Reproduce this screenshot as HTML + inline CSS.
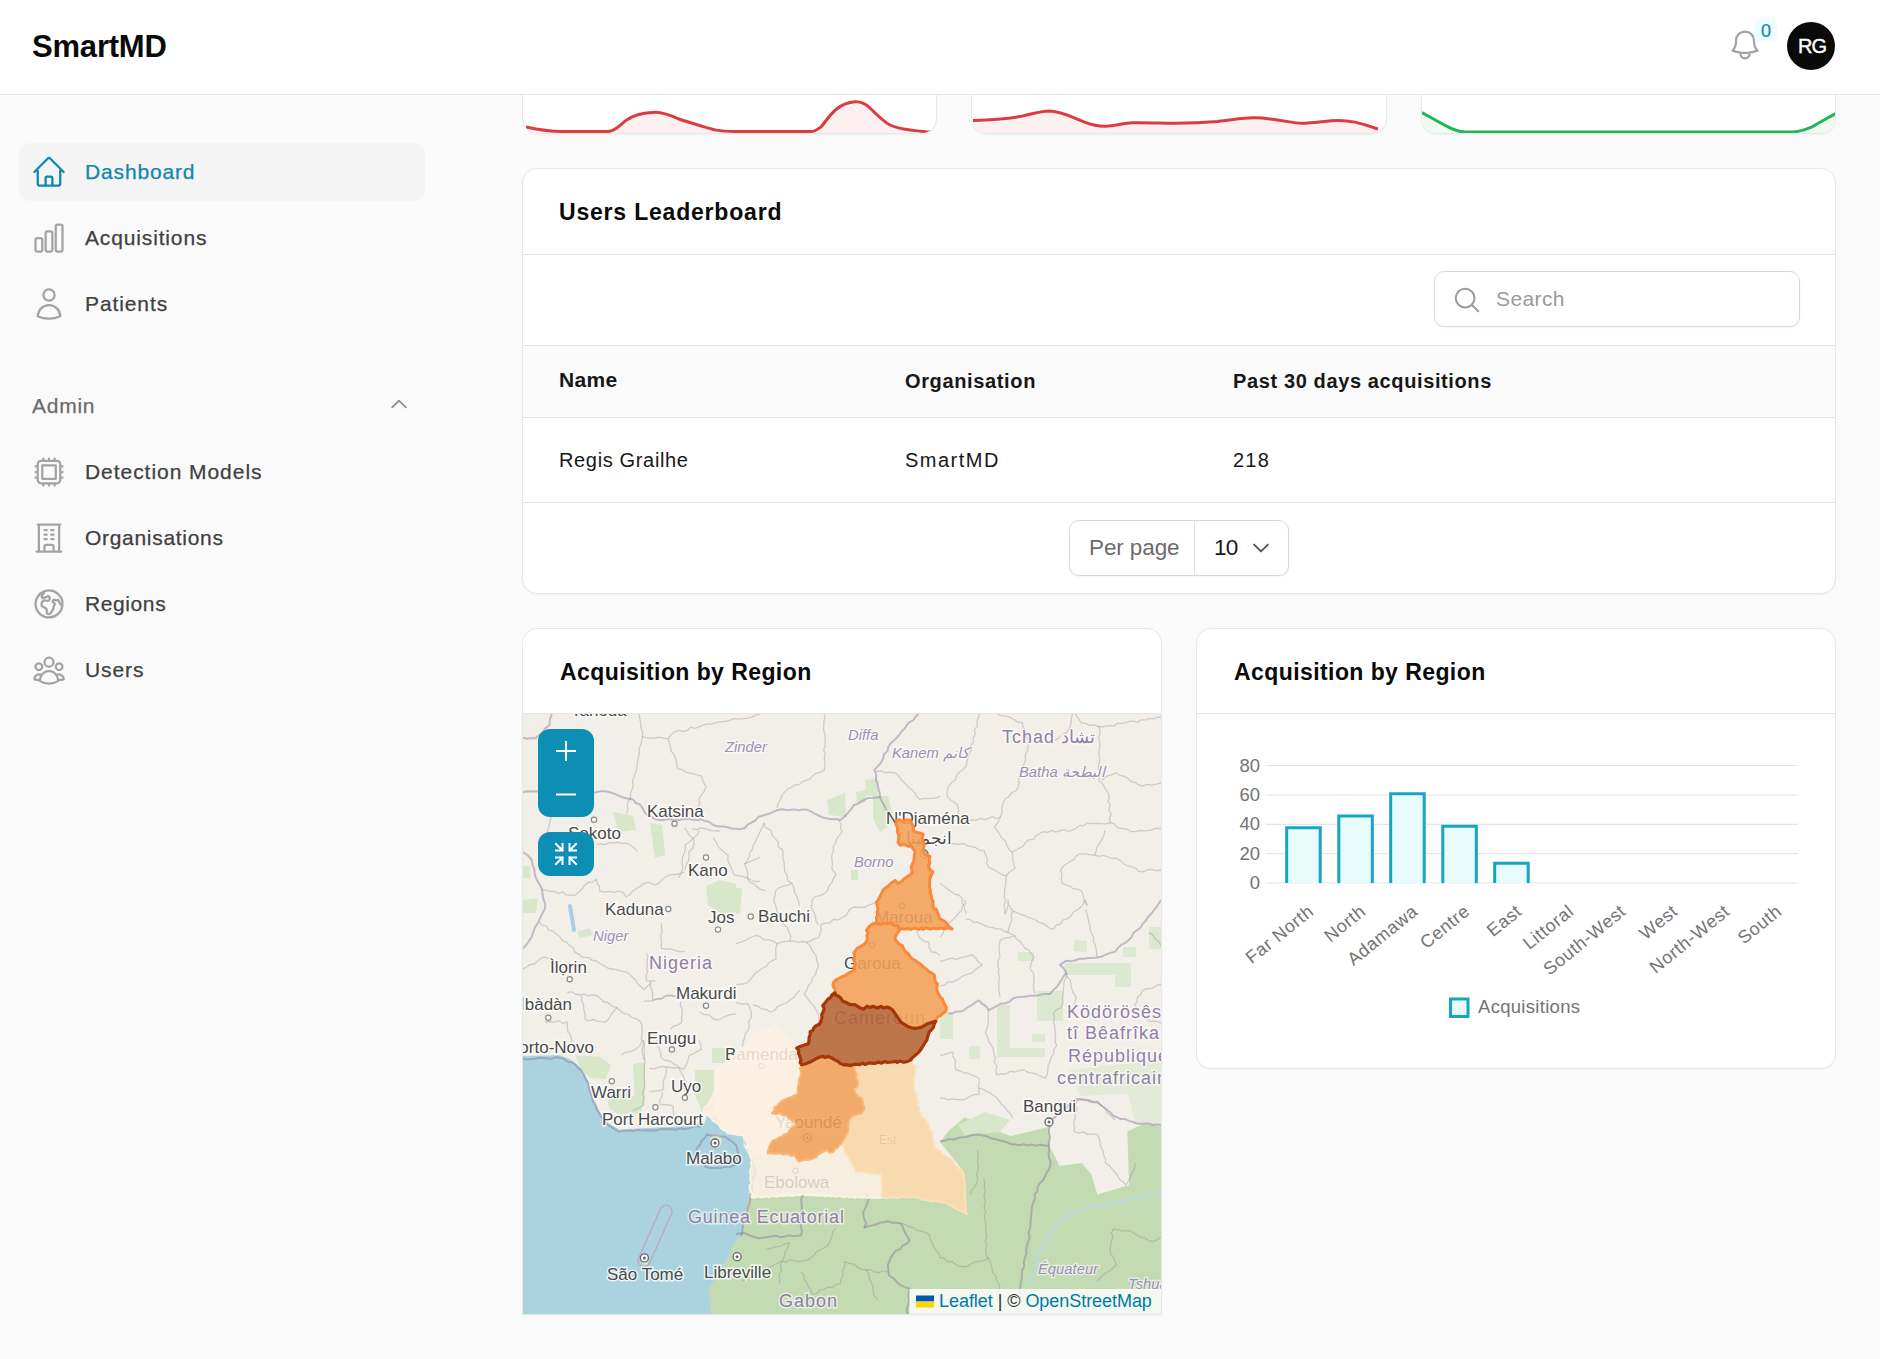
<!DOCTYPE html>
<html><head><meta charset="utf-8">
<style>
*{box-sizing:border-box;margin:0;padding:0}
html,body{width:1880px;height:1359px;overflow:hidden;background:#fafafa;font-family:"Liberation Sans",sans-serif;color:#171717}
.abs{position:absolute}
.t{position:absolute;white-space:nowrap;line-height:1}
#hdr{position:absolute;left:0;top:0;width:1880px;height:95px;background:#fff;border-bottom:1px solid #e5e5e5;z-index:5}
.card{position:absolute;background:#fff;border:1px solid #e7e7e7;border-radius:15px;box-shadow:0 1px 2px rgba(0,0,0,0.04);overflow:hidden}
.nav{color:#404040;font-size:21px;-webkit-text-stroke:0.25px currentColor}
.ico{position:absolute;fill:none;stroke:#a3a3a3;stroke-width:1.5;stroke-linecap:round;stroke-linejoin:round}
.ttl{font-weight:bold;font-size:23px;color:#0a0a0a}
</style></head><body>
<!-- header -->
<div id="hdr">
  <div class="t" style="left:32px;top:31px;font-size:31px;font-weight:bold;color:#0a0a0a;letter-spacing:-0.2px">SmartMD</div>
  <svg class="ico" style="left:1727px;top:27px;stroke:#a3a3a3" width="36" height="36" viewBox="0 0 24 24"><path d="M14.857 17.082a23.848 23.848 0 0 0 5.454-1.31A8.967 8.967 0 0 1 18 9.75V9A6 6 0 0 0 6 9v.75a8.967 8.967 0 0 1-2.312 6.022c1.733.64 3.56 1.085 5.455 1.31m5.714 0a24.255 24.255 0 0 1-5.714 0m5.714 0a3 3 0 1 1-5.714 0"/></svg>
  <div class="abs" style="left:1754px;top:19px;width:23px;height:23px;border-radius:6px;background:#ecfeff"></div>
  <div class="t" style="left:1761px;top:22px;font-size:18px;color:#0e86a8;-webkit-text-stroke:0.2px #0e86a8">0</div>
  <div class="abs" style="left:1787px;top:22px;width:48px;height:48px;border-radius:50%;background:#0a0a0a"></div>
  <div class="t" style="left:1798px;top:36px;font-size:20px;color:#fff;letter-spacing:-1px;-webkit-text-stroke:0.4px #fff">RG</div>
</div>

<!-- sidebar -->
<div class="abs" style="left:19px;top:143px;width:406px;height:58px;border-radius:10px;background:#f4f4f4"></div>
<svg class="ico" style="left:31px;top:154px;stroke:#0f86ab" width="36" height="36" viewBox="0 0 24 24"><path d="m2.25 12 8.954-8.955c.44-.439 1.152-.439 1.591 0L21.75 12M4.5 9.75v10.125c0 .621.504 1.125 1.125 1.125H9.75v-4.875c0-.621.504-1.125 1.125-1.125h2.25c.621 0 1.125.504 1.125 1.125V21h4.125c.621 0 1.125-.504 1.125-1.125V9.75M8.25 21h8.25"/></svg>
<svg class="ico" style="left:31px;top:220px" width="36" height="36" viewBox="0 0 24 24"><path d="M3 13.125C3 12.504 3.504 12 4.125 12h2.25c.621 0 1.125.504 1.125 1.125v6.75C7.5 20.496 6.996 21 6.375 21h-2.25A1.125 1.125 0 0 1 3 19.875v-6.75ZM9.75 8.625c0-.621.504-1.125 1.125-1.125h2.25c.621 0 1.125.504 1.125 1.125v11.25c0 .621-.504 1.125-1.125 1.125h-2.25a1.125 1.125 0 0 1-1.125-1.125V8.625ZM16.5 4.125c0-.621.504-1.125 1.125-1.125h2.25C20.496 3 21 3.504 21 4.125v15.75c0 .621-.504 1.125-1.125 1.125h-2.25a1.125 1.125 0 0 1-1.125-1.125V4.125Z"/></svg>
<svg class="ico" style="left:31px;top:286px" width="36" height="36" viewBox="0 0 24 24"><path d="M15.75 6a3.75 3.75 0 1 1-7.5 0 3.75 3.75 0 0 1 7.5 0ZM4.501 20.118a7.5 7.5 0 0 1 14.998 0A17.933 17.933 0 0 1 12 21.75c-2.676 0-5.216-.584-7.499-1.632Z"/></svg>
<svg class="ico" style="left:31px;top:454px" width="36" height="36" viewBox="0 0 24 24"><path d="M8.25 3v1.5M4.5 8.25H3m18 0h-1.5M4.5 12H3m18 0h-1.5m-15 3.75H3m18 0h-1.5M8.25 19.5V21M12 3v1.5m0 15V21m3.75-18v1.5m0 15V21m-9-1.5h10.5a2.25 2.25 0 0 0 2.25-2.25V6.75a2.25 2.25 0 0 0-2.25-2.25H6.75A2.25 2.25 0 0 0 4.5 6.75v10.5a2.25 2.25 0 0 0 2.25 2.25Zm.75-12h9v9h-9v-9Z"/></svg>
<svg class="ico" style="left:31px;top:520px" width="36" height="36" viewBox="0 0 24 24"><path d="M3.75 21h16.5M4.5 3h15M5.25 3v18m13.5-18v18M9 6.75h1.5m-1.5 3h1.5m-1.5 3h1.5m3-6H15m-1.5 3H15m-1.5 3H15M9 21v-3.375c0-.621.504-1.125 1.125-1.125h3.75c.621 0 1.125.504 1.125 1.125V21"/></svg>
<svg class="ico" style="left:31px;top:586px" width="36" height="36" viewBox="0 0 24 24"><path d="m20.893 13.393-1.135-1.135a2.252 2.252 0 0 1-.421-.585l-1.08-2.16a.414.414 0 0 0-.663-.107.827.827 0 0 1-.812.21l-1.273-.363a.89.89 0 0 0-.738 1.595l.587.39c.59.395.674 1.23.172 1.732l-.2.2c-.212.212-.33.498-.33.796v.41c0 .409-.11.809-.32 1.158l-1.315 2.191a2.11 2.11 0 0 1-1.81 1.025 1.055 1.055 0 0 1-1.055-1.055v-1.172c0-.92-.56-1.747-1.414-2.089l-.655-.261a2.25 2.25 0 0 1-1.383-2.46l.007-.042a2.25 2.25 0 0 1 .29-.787l.09-.15a2.25 2.25 0 0 1 2.37-1.048l1.178.236a1.125 1.125 0 0 0 1.302-.795l.208-.73a1.125 1.125 0 0 0-.578-1.315l-.665-.332-.091.091a2.25 2.25 0 0 1-1.591.659h-.18c-.249 0-.487.1-.662.274a.931.931 0 0 1-1.458-1.137l1.411-2.353a2.25 2.25 0 0 0 .286-.76m11.928 9.869A9 9 0 0 0 8.965 3.525m11.928 9.868A9 9 0 1 1 8.965 3.525"/></svg>
<svg class="ico" style="left:31px;top:652px" width="36" height="36" viewBox="0 0 24 24"><path d="M18 18.72a9.094 9.094 0 0 0 3.741-.479 3 3 0 0 0-4.682-2.72m.94 3.198.001.031c0 .225-.012.447-.037.666A11.944 11.944 0 0 1 12 21c-2.17 0-4.207-.576-5.963-1.584A6.062 6.062 0 0 1 6 18.719m12 0a5.971 5.971 0 0 0-.941-3.197m0 0A5.995 5.995 0 0 0 12 12.75a5.995 5.995 0 0 0-5.058 2.772m0 0a3 3 0 0 0-4.681 2.72 8.986 8.986 0 0 0 3.74.477m.94-3.197a5.971 5.971 0 0 0-.94 3.197M15 6.75a3 3 0 1 1-6 0 3 3 0 0 1 6 0Zm6 3a2.250 2.25 0 1 1-4.5 0 2.25 2.25 0 0 1 4.5 0Zm-13.5 0a2.25 2.25 0 1 1-4.5 0 2.25 2.25 0 0 1 4.5 0Z"/></svg>
<svg class="ico" style="left:388px;top:393px;stroke:#8a8a8a;stroke-width:1.8" width="22" height="22" viewBox="0 0 24 24"><path d="m4.5 15.75 7.5-7.5 7.5 7.5"/></svg>
<div class="t nav" style="left:85px;top:161px;color:#0f86ab;letter-spacing:0.85px">Dashboard</div>
<div class="t nav" style="left:85px;top:227px;letter-spacing:0.85px">Acquisitions</div>
<div class="t nav" style="left:85px;top:293px;letter-spacing:0.9px">Patients</div>
<div class="t nav" style="left:32px;top:395px;color:#6b6b6b;letter-spacing:0.75px">Admin</div>
<div class="t nav" style="left:85px;top:461px;letter-spacing:0.95px">Detection Models</div>
<div class="t nav" style="left:85px;top:527px;letter-spacing:0.7px">Organisations</div>
<div class="t nav" style="left:85px;top:593px;letter-spacing:0.6px">Regions</div>
<div class="t nav" style="left:85px;top:659px;letter-spacing:0.9px">Users</div>

<!-- top stat cards (bottom parts) -->
<div class="card" style="left:522px;top:60px;width:415px;height:74px"></div>
<div class="card" style="left:971px;top:60px;width:416px;height:74px"></div>
<div class="card" style="left:1421px;top:60px;width:415px;height:74px"></div>
<svg class="abs" style="left:0;top:0;z-index:2" width="1880" height="140">
  <defs>
    <clipPath id="c1"><rect x="523" y="60" width="413" height="73" rx="14"/></clipPath>
    <clipPath id="c2"><rect x="972" y="60" width="414" height="73" rx="14"/></clipPath>
    <clipPath id="c3"><rect x="1422" y="60" width="413" height="73" rx="14"/></clipPath>
  </defs>
  <g clip-path="url(#c1)">
    <path d="M526,127 C540,130 552,131.5 562,131.5 L608,131.5 C615,131.5 620,125 626,120.4 C632,116 640,112.5 655,112.2 C662,112 668,114 681,119.8 L702,126.3 C712,129.5 718,131.5 735,131.5 L811,131.5 C815,131.5 818,129 821,126.9 C828,119 836,103 855,101.8 C862,101.5 866,104 870,108 C878,116 884,122 890,125 C896,128 905,130 926,131.7 L936,132 L936,140 L526,140Z" fill="#fdf0f0" stroke="none"/>
    <path d="M526,127 C540,130 552,131.5 562,131.5 L608,131.5 C615,131.5 620,125 626,120.4 C632,116 640,112.5 655,112.2 C662,112 668,114 681,119.8 L702,126.3 C712,129.5 718,131.5 735,131.5 L811,131.5 C815,131.5 818,129 821,126.9 C828,119 836,103 855,101.8 C862,101.5 866,104 870,108 C878,116 884,122 890,125 C896,128 905,130 926,131.7 L936,132" fill="none" stroke="#dc3b40" stroke-width="3"/>
  </g>
  <g clip-path="url(#c2)">
    <path d="M973,120.4 C990,120 1003,119.5 1019.8,116.6 C1030,114.5 1040,111 1050,111 C1062,111.5 1072,117 1084.5,122.1 C1092,125 1098,126.5 1106,126.2 C1115,125.5 1125,123 1132,122.8 C1150,122.5 1165,123.5 1175,123.3 C1190,123 1205,122.3 1218,121.4 C1232,120 1242,117.8 1254,117.8 C1264,117.8 1270,119 1276,119.7 C1288,121.5 1295,123.3 1302,123.3 C1315,123 1328,120.4 1338,120.4 C1346,120.4 1352,121.5 1355,122.1 C1365,124.5 1372,127 1380,129.5 L1386,131 L1386,140 L973,140Z" fill="#fdf0f0"/>
    <path d="M973,120.4 C990,120 1003,119.5 1019.8,116.6 C1030,114.5 1040,111 1050,111 C1062,111.5 1072,117 1084.5,122.1 C1092,125 1098,126.5 1106,126.2 C1115,125.5 1125,123 1132,122.8 C1150,122.5 1165,123.5 1175,123.3 C1190,123 1205,122.3 1218,121.4 C1232,120 1242,117.8 1254,117.8 C1264,117.8 1270,119 1276,119.7 C1288,121.5 1295,123.3 1302,123.3 C1315,123 1328,120.4 1338,120.4 C1346,120.4 1352,121.5 1355,122.1 C1365,124.5 1372,127 1378,129" fill="none" stroke="#dc3b40" stroke-width="3"/>
  </g>
  <g clip-path="url(#c3)">
    <path d="M1422,112.5 C1430,117 1437,121 1443.5,124.5 C1450,128 1456,131.5 1465,132 L1793,132 C1800,131.5 1806,129.5 1812,126.9 C1820,122.5 1828,117.5 1836,113.5 L1836,140 L1422,140Z" fill="#effbf1"/>
    <path d="M1422,112.5 C1430,117 1437,121 1443.5,124.5 C1450,128 1456,131.5 1465,132 L1793,132 C1800,131.5 1806,129.5 1812,126.9 C1820,122.5 1828,117.5 1836,113.5" fill="none" stroke="#22b45a" stroke-width="3"/>
  </g>
</svg>

<!-- leaderboard -->
<div class="card" style="left:522px;top:168px;width:1314px;height:426px">
  <div class="t ttl" style="left:36px;top:32px;letter-spacing:0.8px">Users Leaderboard</div>
  <div class="abs" style="left:0;top:85px;width:100%;height:1px;background:#e5e5e5"></div>
  <div class="abs" style="left:911px;top:102px;width:366px;height:56px;border:1px solid #d9d9d9;border-radius:10px;box-shadow:0 1px 2px rgba(0,0,0,0.05)"></div>
  <svg class="ico" style="left:929px;top:116px;stroke:#9a9a9a;stroke-width:1.6" width="30" height="30" viewBox="0 0 24 24"><path d="m21 21-5.197-5.197m0 0A7.5 7.5 0 1 0 5.196 5.196a7.5 7.5 0 0 0 10.607 10.607Z"/></svg>
  <div class="t" style="left:973px;top:119px;font-size:21px;color:#9a9a9a;letter-spacing:0.4px">Search</div>
  <div class="abs" style="left:0;top:176px;width:100%;height:73px;background:#fafafa;border-top:1px solid #e5e5e5;border-bottom:1px solid #e5e5e5"></div>
  <div class="t" style="left:36px;top:200px;font-size:21px;font-weight:bold;letter-spacing:0.3px">Name</div>
  <div class="t" style="left:382px;top:202px;font-size:20px;font-weight:bold;letter-spacing:0.64px">Organisation</div>
  <div class="t" style="left:710px;top:202px;font-size:20px;font-weight:bold;letter-spacing:0.62px">Past 30 days acquisitions</div>
  <div class="t" style="left:36px;top:281px;font-size:20px;letter-spacing:0.65px">Regis Grailhe</div>
  <div class="t" style="left:382px;top:281px;font-size:20px;letter-spacing:1.5px">SmartMD</div>
  <div class="t" style="left:710px;top:281px;font-size:20px;letter-spacing:1.2px">218</div>
  <div class="abs" style="left:0;top:333px;width:100%;height:1px;background:#e5e5e5"></div>
  <div class="abs" style="left:546px;top:351px;width:220px;height:56px;border:1px solid #d9d9d9;border-radius:10px;box-shadow:0 1px 2px rgba(0,0,0,0.05)"></div>
  <div class="abs" style="left:671px;top:351px;width:1px;height:56px;background:#e0e0e0"></div>
  <div class="t" style="left:566px;top:368px;font-size:22.5px;color:#6b6b6b;letter-spacing:-0.1px">Per page</div>
  <div class="t" style="left:691px;top:368px;font-size:22.5px;color:#171717;letter-spacing:-0.8px">10</div>
  <svg class="ico" style="left:727px;top:368px;stroke:#525252;stroke-width:2" width="22" height="22" viewBox="0 0 24 24"><path d="m19.5 8.25-7.5 7.5-7.5-7.5"/></svg>
</div>

<!-- map card -->
<div class="card" id="mapcard" style="left:522px;top:628px;width:640px;height:687px;border-bottom-left-radius:0;border-bottom-right-radius:0">
  <div class="t ttl" style="left:37px;top:32px;letter-spacing:0.42px">Acquisition by Region</div>
  <div class="abs" style="left:0;top:84px;width:100%;height:1px;background:#e5e5e5"></div>
</div>

<!-- chart card -->
<div class="card" style="left:1196px;top:628px;width:640px;height:441px">
  <div class="t ttl" style="left:37px;top:32px;letter-spacing:0.42px">Acquisition by Region</div>
  <div class="abs" style="left:0;top:84px;width:100%;height:1px;background:#e5e5e5"></div>
</div>
<svg class="abs" style="left:0;top:0;z-index:3" width="1880" height="1359">
<line x1="1265.5" y1="765.5" x2="1798" y2="765.5" stroke="#e5e5e5" stroke-width="1.2"/>
<line x1="1265.5" y1="795" x2="1798" y2="795" stroke="#e5e5e5" stroke-width="1.2"/>
<line x1="1265.5" y1="824.3" x2="1798" y2="824.3" stroke="#e5e5e5" stroke-width="1.2"/>
<line x1="1265.5" y1="853.7" x2="1798" y2="853.7" stroke="#e5e5e5" stroke-width="1.2"/>
<line x1="1265.5" y1="883" x2="1798" y2="883" stroke="#e5e5e5" stroke-width="1.2"/>
<text x="1260" y="771.5" text-anchor="end" font-size="18.5" fill="#737373" font-family="Liberation Sans">80</text>
<text x="1260" y="801" text-anchor="end" font-size="18.5" fill="#737373" font-family="Liberation Sans">60</text>
<text x="1260" y="830.3" text-anchor="end" font-size="18.5" fill="#737373" font-family="Liberation Sans">40</text>
<text x="1260" y="859.7" text-anchor="end" font-size="18.5" fill="#737373" font-family="Liberation Sans">20</text>
<text x="1260" y="889" text-anchor="end" font-size="18.5" fill="#737373" font-family="Liberation Sans">0</text>
<rect x="1285.2" y="826.3" width="36.5" height="56.700000000000045" fill="#e9fcfd"/>
<path d="M1286.7,883 L1286.7,827.8 L1320.2,827.8 L1320.2,883" fill="none" stroke="#16a6c4" stroke-width="3"/>
<rect x="1337.3" y="814.4" width="36.5" height="68.60000000000002" fill="#e9fcfd"/>
<path d="M1338.8,883 L1338.8,815.9 L1372.3,815.9 L1372.3,883" fill="none" stroke="#16a6c4" stroke-width="3"/>
<rect x="1389.2" y="792.2" width="36.5" height="90.79999999999995" fill="#e9fcfd"/>
<path d="M1390.7,883 L1390.7,793.7 L1424.2,793.7 L1424.2,883" fill="none" stroke="#16a6c4" stroke-width="3"/>
<rect x="1441.3" y="824.8" width="36.5" height="58.200000000000045" fill="#e9fcfd"/>
<path d="M1442.8,883 L1442.8,826.3 L1476.3,826.3 L1476.3,883" fill="none" stroke="#16a6c4" stroke-width="3"/>
<rect x="1493.2" y="861.7" width="36.5" height="21.299999999999955" fill="#e9fcfd"/>
<path d="M1494.7,883 L1494.7,863.2 L1528.2,863.2 L1528.2,883" fill="none" stroke="#16a6c4" stroke-width="3"/>
<text transform="translate(1307.4,904) rotate(-39)" text-anchor="end" dy="12" font-size="18" letter-spacing="0.6" fill="#737373" font-family="Liberation Sans">Far North</text>
<text transform="translate(1359.4,904) rotate(-39)" text-anchor="end" dy="12" font-size="18" letter-spacing="0.6" fill="#737373" font-family="Liberation Sans">North</text>
<text transform="translate(1411.4,904) rotate(-39)" text-anchor="end" dy="12" font-size="18" letter-spacing="0.6" fill="#737373" font-family="Liberation Sans">Adamawa</text>
<text transform="translate(1463.4,904) rotate(-39)" text-anchor="end" dy="12" font-size="18" letter-spacing="0.6" fill="#737373" font-family="Liberation Sans">Centre</text>
<text transform="translate(1515.4,904) rotate(-39)" text-anchor="end" dy="12" font-size="18" letter-spacing="0.6" fill="#737373" font-family="Liberation Sans">East</text>
<text transform="translate(1567.4,904) rotate(-39)" text-anchor="end" dy="12" font-size="18" letter-spacing="0.6" fill="#737373" font-family="Liberation Sans">Littoral</text>
<text transform="translate(1619.4,904) rotate(-39)" text-anchor="end" dy="12" font-size="18" letter-spacing="0.6" fill="#737373" font-family="Liberation Sans">South-West</text>
<text transform="translate(1671.4,904) rotate(-39)" text-anchor="end" dy="12" font-size="18" letter-spacing="0.6" fill="#737373" font-family="Liberation Sans">West</text>
<text transform="translate(1723.4,904) rotate(-39)" text-anchor="end" dy="12" font-size="18" letter-spacing="0.6" fill="#737373" font-family="Liberation Sans">North-West</text>
<text transform="translate(1775.4,904) rotate(-39)" text-anchor="end" dy="12" font-size="18" letter-spacing="0.6" fill="#737373" font-family="Liberation Sans">South</text>
<rect x="1450.5" y="999" width="17.5" height="17.5" fill="#e9fcfd" stroke="#16a6c4" stroke-width="3"/>
<text x="1478" y="1013" font-size="18.5" fill="#737373" font-family="Liberation Sans" letter-spacing="0.3">Acquisitions</text>
</svg>
<!--MAP--><svg class="abs" style="left:523px;top:714px;z-index:3" width="638" height="600" viewBox="523 714 638 600">
<rect x="523" y="714" width="638" height="600" fill="#f2efe9"/>
<path d="M736.0,1190.0 L750.0,1198.0 L800.0,1196.0 L883.0,1198.0 L917.0,1198.0 L949.0,1204.0 L967.0,1214.0 L966.0,1196.0 L964.0,1172.0 L940.0,1142.0 L949.4,1130.0 L965.0,1117.3 L979.4,1123.6 L995.0,1130.0 L1010.9,1136.0 L1029.8,1131.5 L1048.7,1126.8 L1050.0,1147.0 L1059.7,1166.0 L1081.7,1163.0 L1091.0,1174.0 L1097.5,1194.5 L1129.0,1185.0 L1127.4,1131.5 L1144.7,1123.6 L1161.0,1126.8 L1161.0,1314.0 L710.0,1314.0 L708.0,1290.0 L715.0,1278.0 L727.0,1259.0 L732.0,1240.0 L737.0,1224.0 L741.0,1207.0 Z" fill="#c3dbb3"/>
<path d="M1070.0,1070.0 L1161.0,1060.0 L1161.0,1092.0 L1080.0,1096.0 Z" fill="#e3ead8"/>
<path d="M1128.0,1092.0 L1161.0,1090.0 L1161.0,1125.0 L1135.0,1124.0 Z" fill="#e3ead8"/>
<path d="M613.0,812.0 L633.0,816.0 L636.0,830.0 L618.0,832.0 Z" fill="#d8e6ca"/>
<path d="M650.0,823.0 L662.0,825.0 L665.0,855.0 L655.0,858.0 Z" fill="#d8e6ca"/>
<path d="M523.0,900.0 L538.0,898.0 L536.0,913.0 L523.0,913.0 Z" fill="#d8e6ca"/>
<path d="M523.0,866.0 L530.0,866.0 L530.0,878.0 L523.0,878.0 Z" fill="#d8e6ca"/>
<path d="M706.0,886.0 L720.0,880.0 L736.0,884.0 L736.0,912.0 L722.0,914.0 L708.0,905.0 Z" fill="#d8e6ca"/>
<path d="M577.0,932.0 L590.0,928.0 L593.0,935.0 L580.0,938.0 Z" fill="#d8e6ca"/>
<path d="M827.0,800.0 L845.0,793.0 L846.0,817.0 L829.0,815.0 Z" fill="#d8e6ca"/>
<path d="M856.0,792.0 L866.0,790.0 L866.0,802.0 L857.0,803.0 Z" fill="#d8e6ca"/>
<path d="M865.0,780.0 L877.0,779.0 L878.0,796.0 L866.0,796.0 Z" fill="#d8e6ca"/>
<path d="M873.0,796.0 L888.0,796.0 L895.0,822.0 L880.0,832.0 L873.0,818.0 Z" fill="#d8e6ca"/>
<path d="M851.0,870.0 L858.0,870.0 L858.0,880.0 L851.0,880.0 Z" fill="#d8e6ca"/>
<path d="M736.0,888.0 L742.0,888.0 L740.0,914.0 L736.0,914.0 Z" fill="#d8e6ca"/>
<path d="M1074.0,940.0 L1087.0,941.0 L1087.0,952.0 L1074.0,951.0 Z" fill="#dde8d0"/>
<path d="M1018.0,952.0 L1034.0,952.0 L1034.0,961.0 L1018.0,961.0 Z" fill="#dde8d0"/>
<path d="M1123.0,947.0 L1136.0,947.0 L1136.0,957.0 L1123.0,957.0 Z" fill="#dde8d0"/>
<path d="M1065.0,963.0 L1131.0,963.0 L1131.0,987.0 L1115.0,987.0 L1115.0,975.0 L1065.0,975.0 Z" fill="#dde8d0"/>
<path d="M1037.0,991.0 L1063.0,991.0 L1063.0,1021.0 L1037.0,1021.0 Z" fill="#dde8d0"/>
<path d="M997.0,1005.0 L1010.0,1005.0 L1010.0,1048.0 L1045.0,1048.0 L1045.0,1057.0 L997.0,1057.0 Z" fill="#dde8d0"/>
<path d="M1032.0,1034.0 L1045.0,1034.0 L1045.0,1042.0 L1032.0,1042.0 Z" fill="#dde8d0"/>
<path d="M940.0,1013.0 L953.0,1013.0 L953.0,1039.0 L940.0,1039.0 Z" fill="#dde8d0"/>
<path d="M1149.0,927.0 L1161.0,927.0 L1161.0,949.0 L1149.0,949.0 Z" fill="#dde8d0"/>
<path d="M969.0,1046.0 L980.0,1046.0 L980.0,1059.0 L969.0,1059.0 Z" fill="#dde8d0"/>
<path d="M575.0,1055.0 L600.0,1057.0 L611.0,1065.0 L606.0,1079.0 L590.0,1078.0 L580.0,1068.0 Z" fill="#d8e6ca"/>
<path d="M607.0,1095.0 L625.0,1093.0 L642.0,1100.0 L642.0,1113.0 L620.0,1115.0 L609.0,1108.0 Z" fill="#d8e6ca"/>
<path d="M633.0,1064.0 L645.0,1062.0 L645.0,1106.0 L635.0,1106.0 Z" fill="#d8e6ca"/>
<path d="M695.0,1070.0 L714.0,1070.0 L714.0,1110.0 L702.0,1112.0 L695.0,1095.0 Z" fill="#d8e6ca"/>
<path d="M712.0,1048.0 L725.0,1048.0 L725.0,1063.0 L712.0,1063.0 Z" fill="#d8e6ca"/>
<path d="M958.0,1125.0 L985.0,1112.0 L1010.0,1120.0 L1000.0,1132.0 L965.0,1135.0 Z" fill="#d8e6ca"/>
<path d="M523.0,1056.0 L560.0,1055.3 L571.8,1060.0 L581.2,1068.3 L588.3,1081.2 L593.0,1098.9 L598.8,1110.6 L607.1,1122.4 L618.9,1129.5 L642.4,1128.3 L666.0,1127.1 L689.5,1125.9 L704.8,1122.4 L707.1,1115.3 L716.6,1116.5 L718.9,1124.8 L727.2,1134.2 L743.6,1136.5 L743.6,1146.0 L750.7,1157.7 L753.0,1169.5 L749.5,1187.1 L748.3,1200.0 L744.7,1215.0 L743.0,1235.0 L736.7,1240.0 L732.0,1248.0 L727.0,1259.0 L715.5,1278.0 L708.4,1289.7 L710.8,1314.0 L523.0,1314.0 Z" fill="#aad3df"/>
<ellipse cx="716" cy="1141" rx="6" ry="7" fill="#dfe6d2"/>
<ellipse cx="645" cy="1261" rx="3" ry="4" fill="#d9e6c8"/>
<path d="M1021.9,1314.0 L1030.0,1287.4 L1040.8,1249.6 L1059.7,1219.7 L1081.7,1210.2 L1113.2,1202.4 L1161.0,1193.0" fill="none" stroke="#b9d9e2" stroke-width="2"/>
<path d="M570,906 L574,930" stroke="#a8cfe0" stroke-width="4" stroke-linecap="round"/>
<path d="M639.2,714.0 L639.7,718.5 L640.7,723.0 L641.0,727.5 L642.6,731.9 L642.5,736.5 L646.7,737.7 L650.9,738.1 L655.2,738.0 L659.6,737.1 L663.7,738.4 L668.0,738.7 L670.9,735.0 L674.5,732.0 L678.5,730.4 L683.0,731.3 L687.2,730.5 L690.7,727.1 L695.3,728.3 L699.3,726.7 L703.3,725.2 L707.4,724.0 L711.7,724.1 L715.7,722.6 L719.9,721.8 L724.6,721.5 L729.3,720.7 L733.7,718.6 L738.5,718.8 L743.0,718.5 L747.4,718.1 L751.7,717.1 L755.8,715.2 L760.0,714.0" fill="none" stroke="#8c7d8c" stroke-opacity="0.32" stroke-width="1.3" stroke-linejoin="round"/>
<path d="M642.5,736.5 L641.8,740.6 L640.8,744.7 L639.1,748.6 L639.4,752.9 L638.6,757.0 L637.6,761.1 L637.0,765.2 L636.9,769.5 L635.1,773.4 L633.8,777.4 L632.5,781.4 L633.3,785.9 L631.8,789.9 L630.4,793.9 L630.6,798.1 L627.9,801.7 L627.3,805.7 L628.0,810.1 L626.0,813.8" fill="none" stroke="#8c7d8c" stroke-opacity="0.32" stroke-width="1.3" stroke-linejoin="round"/>
<path d="M668.0,738.7 L669.4,743.0 L670.4,747.4 L671.7,751.7 L674.4,755.6 L676.1,759.8 L676.5,764.4 L677.6,768.8 L681.7,769.4 L685.2,771.9 L689.3,772.8 L693.3,773.8 L697.2,774.9 L701.2,775.9 L703.2,781.4 L705.9,786.5 L704.3,791.2 L701.3,795.2 L698.8,799.4 L699.7,803.5 L697.7,807.7 L699.9,811.9 L698.8,816.0" fill="none" stroke="#8c7d8c" stroke-opacity="0.32" stroke-width="1.3" stroke-linejoin="round"/>
<path d="M824.3,714.0 L824.9,718.0 L823.8,722.0 L823.8,726.0 L823.4,730.0 L825.1,734.0 L825.0,738.0 L825.2,742.0 L825.0,746.0 L823.7,750.0 L825.3,754.0 L824.2,758.0 L825.0,762.0 L824.8,766.0 L824.3,770.0 L820.7,772.1 L816.5,773.1 L813.1,775.6 L810.2,778.9 L806.2,780.3 L802.2,781.7 L799.1,784.6 L794.7,785.0 L791.2,787.2 L787.7,789.3 L784.6,792.0 L782.0,795.7 L780.3,799.8 L778.0,803.7 L777.2,808.2" fill="none" stroke="#8c7d8c" stroke-opacity="0.32" stroke-width="1.3" stroke-linejoin="round"/>
<path d="M839.0,820.0 L841.0,823.7 L840.5,828.0 L842.0,831.8 L839.4,835.3 L836.6,838.6 L835.8,843.1 L833.1,846.5 L833.5,850.9 L831.9,855.3 L831.8,859.7 L832.5,864.1 L831.7,868.5 L836.1,874.4 L833.5,878.2 L831.9,882.6 L828.9,886.2 L827.3,890.6 L824.1,893.7 L820.3,895.7 L815.7,896.4 L812.5,899.5 L811.3,907.0 L813.4,911.3 L815.4,915.6 L815.9,920.6 L818.4,924.7" fill="none" stroke="#8c7d8c" stroke-opacity="0.32" stroke-width="1.3" stroke-linejoin="round"/>
<path d="M764.0,823.0 L765.9,827.7 L770.9,830.3 L772.3,835.4 L775.7,839.1 L778.3,842.4 L778.3,847.0 L782.4,849.6 L783.1,853.8 L782.9,858.4 L784.1,862.7 L784.4,867.2 L784.8,871.7 L787.4,875.8 L787.5,880.3 L792.0,883.3 L793.9,887.6 L794.4,892.3 L796.9,896.3 L798.4,900.7 L799.3,905.3" fill="none" stroke="#8c7d8c" stroke-opacity="0.32" stroke-width="1.3" stroke-linejoin="round"/>
<path d="M764.0,823.0 L762.6,826.9 L760.6,830.5 L759.0,834.3 L757.1,838.0 L755.5,841.8 L753.2,845.2 L752.3,849.4 L749.7,852.7 L749.4,857.2 L747.0,860.6 L744.8,864.1 L746.3,868.4 L747.9,872.7 L747.5,877.5 L749.2,881.8 L753.5,883.6 L756.9,886.9 L760.8,889.4 L765.4,890.6" fill="none" stroke="#8c7d8c" stroke-opacity="0.32" stroke-width="1.3" stroke-linejoin="round"/>
<path d="M792.0,883.3 L787.9,885.1 L783.5,886.2 L779.3,887.7 L775.7,890.6 L775.2,895.4 L773.7,900.0 L776.0,907.0 L777.1,911.4 L779.0,915.5 L780.9,919.5 L783.0,923.5 L786.8,927.1 L789.0,931.8 L790.8,936.4 L790.1,941.2 L794.2,941.2 L798.3,942.4 L802.5,941.5 L806.6,942.4 L810.5,940.8 L814.3,938.8 L818.4,937.7 L820.1,933.5 L821.1,929.2 L820.8,924.7 L825.0,923.1 L829.7,923.1 L833.2,919.4 L838.0,919.9 L842.0,917.7 L846.6,914.9 L849.2,909.9 L853.7,907.0 L859.6,907.5 L865.5,907.0 L869.5,904.8 L874.0,903.4 L877.3,900.0" fill="none" stroke="#8c7d8c" stroke-opacity="0.32" stroke-width="1.3" stroke-linejoin="round"/>
<path d="M875.8,771.4 L880.7,770.9 L885.4,772.6 L890.2,772.1 L895.0,772.9 L898.3,775.3 L900.6,778.8 L903.3,781.7 L906.1,784.6 L909.0,787.5 L912.1,790.1 L914.9,793.1 L916.9,796.8 L920.0,799.4 L923.9,798.3 L928.1,798.6 L932.1,798.3 L936.1,797.9 L940.0,796.4" fill="none" stroke="#8c7d8c" stroke-opacity="0.32" stroke-width="1.3" stroke-linejoin="round"/>
<path d="M736.0,943.6 L740.2,942.4 L744.3,941.0 L748.0,938.7 L752.0,937.0 L756.0,935.3 L760.3,936.7 L764.0,939.8 L768.9,939.8 L773.3,941.1 L777.2,943.6 L781.4,942.2 L785.7,941.4 L790.1,941.2" fill="none" stroke="#8c7d8c" stroke-opacity="0.32" stroke-width="1.3" stroke-linejoin="round"/>
<path d="M777.2,943.6 L775.7,948.6 L775.9,953.8 L776.0,958.9 L772.3,960.7 L768.8,962.7 L766.5,966.4 L762.6,968.0 L759.5,970.6 L755.8,972.8 L753.0,975.8 L750.6,979.3 L747.8,982.4 L744.0,984.0 L740.0,984.2 L736.0,984.8" fill="none" stroke="#8c7d8c" stroke-opacity="0.32" stroke-width="1.3" stroke-linejoin="round"/>
<path d="M806.6,942.4 L810.4,946.2 L812.5,951.3 L816.0,955.3 L816.9,960.7 L818.4,965.9 L816.7,970.0 L815.5,974.4 L812.4,978.0 L811.3,982.4 L808.3,985.9 L806.6,990.3 L804.3,994.2 L807.8,998.9 L811.3,1003.6 L814.8,1007.3 L817.2,1011.8 L819.1,1017.6 L818.4,1023.6" fill="none" stroke="#8c7d8c" stroke-opacity="0.32" stroke-width="1.3" stroke-linejoin="round"/>
<path d="M736.0,1002.4 L741.8,1004.2 L747.8,1003.6 L749.9,1008.1 L751.3,1012.7 L751.3,1017.7 L748.7,1021.2 L749.3,1025.8 L748.1,1029.8 L745.5,1033.3 L744.8,1037.5 L743.1,1041.3 L742.6,1047.2 L744.2,1053.0" fill="none" stroke="#8c7d8c" stroke-opacity="0.32" stroke-width="1.3" stroke-linejoin="round"/>
<path d="M917.3,929.4 L917.4,933.8 L919.6,937.7 L923.8,941.1 L929.0,942.4 L929.2,947.4 L931.4,951.8 L936.1,952.5 L940.0,955.3" fill="none" stroke="#8c7d8c" stroke-opacity="0.32" stroke-width="1.3" stroke-linejoin="round"/>
<path d="M979.7,714.0 L978.1,717.8 L976.8,721.7 L977.5,726.1 L974.4,729.5 L975.4,734.0 L973.2,737.7 L973.6,742.0 L970.9,745.5 L971.4,749.9 L969.0,753.5 L968.0,757.4 L966.8,761.4 L966.5,765.5 L963.7,769.0 L959.9,771.7 L956.7,774.9 L955.5,779.8 L951.7,782.6 L948.8,786.0 L946.9,791.0 L947.4,796.4 L950.4,799.8 L954.4,802.2 L957.7,805.2 L958.7,810.1 L957.5,815.2 L959.1,820.0" fill="none" stroke="#8c7d8c" stroke-opacity="0.32" stroke-width="1.3" stroke-linejoin="round"/>
<path d="M959.1,820.0 L963.5,819.6 L968.0,821.0 L972.4,819.9 L976.5,820.4 L980.3,818.3 L984.5,819.6 L988.4,818.6 L992.2,816.6 L996.4,818.6 L1000.3,817.0 L997.9,822.5 L994.4,827.3 L997.3,830.6 L999.6,834.3 L1001.8,838.1 L1005.3,841.0 L1006.6,845.4 L1008.9,849.2 L1012.1,852.3 L1012.8,856.4 L1012.8,860.5 L1014.0,864.5 L1015.0,868.5 L1010.1,871.5 L1006.2,875.8 L1001.4,874.3 L997.2,871.7 L993.0,869.3 L988.6,867.0 L986.5,863.2 L987.5,858.6 L985.6,854.8 L984.1,850.8 L979.6,850.3 L975.9,847.7 L971.7,846.6 L967.4,845.7 L963.5,843.5 L958.8,844.4 L954.1,843.6 L949.4,844.6 L944.7,843.3 L940.0,843.5" fill="none" stroke="#8c7d8c" stroke-opacity="0.32" stroke-width="1.3" stroke-linejoin="round"/>
<path d="M1000.3,817.0 L1002.0,812.7 L1001.7,808.0 L1002.9,803.5 L1004.7,799.3 L1008.8,796.6 L1011.9,792.5 L1016.5,790.5 L1018.2,786.7 L1019.1,782.8 L1018.3,778.4 L1020.9,774.9 L1021.4,770.9 L1022.7,767.0 L1024.5,763.3 L1025.6,759.4 L1025.1,755.1 L1027.2,751.5 L1028.0,747.5 L1028.3,743.4 L1028.3,738.9 L1024.8,735.5 L1025.9,730.7 L1022.9,727.1 L1022.4,722.8 L1017.9,722.2 L1014.2,719.6 L1010.2,717.6 L1006.1,715.8 L1001.4,715.8 L997.4,714.0" fill="none" stroke="#8c7d8c" stroke-opacity="0.32" stroke-width="1.3" stroke-linejoin="round"/>
<path d="M1012.1,852.3 L1015.7,850.3 L1019.3,848.2 L1023.1,846.4 L1025.4,842.5 L1028.6,839.9 L1033.2,839.3 L1035.9,835.9 L1039.4,833.7 L1043.0,831.7 L1047.2,832.3 L1051.4,830.4 L1055.7,832.1 L1059.8,830.8 L1063.9,829.5 L1068.3,831.5 L1072.4,830.2 L1076.2,828.5 L1079.3,825.6 L1083.8,825.5 L1087.1,822.9 L1091.5,823.6 L1095.9,823.5 L1100.4,823.3 L1104.8,824.2 L1109.2,822.9 L1114.1,823.5 L1117.6,827.6 L1122.3,828.5 L1127.1,829.3 L1131.3,831.7 L1135.6,831.6 L1139.7,830.5 L1144.1,830.8 L1148.3,830.6 L1152.5,829.7 L1156.7,828.2 L1161.0,828.8" fill="none" stroke="#8c7d8c" stroke-opacity="0.32" stroke-width="1.3" stroke-linejoin="round"/>
<path d="M1098.9,725.8 L1099.9,730.0 L1099.9,734.2 L1098.6,738.4 L1099.7,742.5 L1099.9,746.7 L1099.0,750.9 L1099.1,755.1 L1099.6,759.3 L1099.2,763.5 L1098.0,767.6 L1099.9,771.8 L1099.7,776.0 L1098.9,780.2 L1102.5,783.6 L1104.6,787.9 L1107.5,791.8 L1109.2,796.4 L1108.2,800.9 L1110.2,805.2 L1108.7,809.7 L1111.2,814.0 L1109.4,818.5 L1110.7,822.9" fill="none" stroke="#8c7d8c" stroke-opacity="0.32" stroke-width="1.3" stroke-linejoin="round"/>
<path d="M1075.4,714.0 L1078.2,718.5 L1081.2,722.8 L1085.4,723.3 L1089.3,725.4 L1093.7,724.9 L1097.7,726.3 L1101.8,727.2 L1105.7,726.1 L1109.6,725.5 L1113.8,726.2 L1117.3,723.3 L1121.4,723.4 L1125.4,722.8 L1129.2,721.4 L1133.2,721.1 L1137.5,722.1 L1141.2,719.8 L1145.2,719.9 L1149.1,718.7 L1153.2,718.9 L1157.0,717.5 L1161.0,717.0" fill="none" stroke="#8c7d8c" stroke-opacity="0.32" stroke-width="1.3" stroke-linejoin="round"/>
<path d="M1072.4,714.0 L1071.3,718.9 L1071.0,723.9 L1069.5,728.7 L1066.6,732.6 L1061.9,734.3 L1058.9,738.1 L1054.8,740.5" fill="none" stroke="#8c7d8c" stroke-opacity="0.32" stroke-width="1.3" stroke-linejoin="round"/>
<path d="M1101.8,780.2 L1104.9,777.2 L1108.7,775.6 L1112.8,774.4 L1116.6,772.8 L1120.0,775.4 L1124.4,776.4 L1128.1,778.6 L1131.3,781.7 L1135.4,782.5 L1138.9,785.2 L1143.0,786.0 L1147.3,784.3 L1152.1,785.1 L1156.6,784.2 L1161.0,783.0" fill="none" stroke="#8c7d8c" stroke-opacity="0.32" stroke-width="1.3" stroke-linejoin="round"/>
<path d="M1104.8,830.2 L1104.1,834.8 L1102.1,838.8 L1100.1,842.9 L1097.0,846.5 L1096.2,851.0 L1094.5,855.2 L1098.8,856.4 L1103.5,855.4 L1107.8,857.0 L1112.1,858.5 L1116.6,858.2 L1120.2,860.5 L1123.3,863.6 L1127.1,865.7 L1131.4,866.7 L1135.6,868.1 L1138.6,871.4 L1143.1,871.8 L1147.5,869.9 L1152.0,869.3 L1156.6,870.9 L1161.0,870.0" fill="none" stroke="#8c7d8c" stroke-opacity="0.32" stroke-width="1.3" stroke-linejoin="round"/>
<path d="M1094.5,855.2 L1089.6,854.6 L1084.7,853.9 L1079.8,853.8 L1076.1,855.9 L1073.8,859.6 L1069.9,861.6 L1066.3,863.8 L1063.1,866.5 L1060.6,870.0 L1061.9,874.3 L1061.2,878.8 L1062.1,883.2 L1065.8,884.9 L1069.7,886.1 L1073.1,888.7 L1077.4,889.1 L1081.2,890.5 L1083.3,895.4 L1084.1,900.8 L1087.1,905.3" fill="none" stroke="#8c7d8c" stroke-opacity="0.32" stroke-width="1.3" stroke-linejoin="round"/>
<path d="M1006.2,875.8 L1006.0,880.0 L1005.6,884.3 L1004.8,888.5 L1004.5,892.7 L1004.4,897.0 L1005.6,901.3 L1003.9,905.5 L1005.1,909.8 L1004.7,914.0" fill="none" stroke="#8c7d8c" stroke-opacity="0.32" stroke-width="1.3" stroke-linejoin="round"/>
<path d="M940.0,883.2 L943.6,885.8 L947.0,888.6 L950.6,891.1 L954.1,893.8 L958.6,895.0 L962.0,897.9 L962.0,902.3 L964.1,906.0 L964.8,910.1 L966.5,914.0" fill="none" stroke="#8c7d8c" stroke-opacity="0.32" stroke-width="1.3" stroke-linejoin="round"/>
<path d="M1066.3,972.9 L1066.3,977.3 L1064.1,981.5 L1063.7,985.9 L1063.3,990.3 L1063.2,994.7 L1062.5,999.1 L1063.0,1003.6 L1060.7,1007.8 L1056.3,1009.8 L1053.3,1013.3 L1054.4,1017.3 L1053.5,1021.5 L1054.7,1025.4 L1054.8,1029.5 L1055.3,1033.6 L1055.6,1037.6 L1055.3,1041.7 L1056.6,1045.7 L1053.8,1049.3 L1053.7,1053.9 L1051.0,1057.6 L1050.1,1061.9 L1047.9,1065.7 L1047.9,1070.1 L1047.4,1074.3 L1045.2,1078.1 L1041.0,1076.5 L1037.0,1074.2 L1032.6,1073.2 L1028.1,1072.4 L1024.2,1070.0 L1019.5,1070.3 L1015.1,1072.0 L1010.3,1071.4 L1006.0,1074.0 L1001.2,1073.8 L996.7,1074.8 L995.9,1070.5 L996.9,1066.0 L994.1,1062.0 L995.5,1057.4 L993.7,1053.2 L993.4,1048.9 L991.1,1045.0 L988.7,1041.1 L987.3,1036.8 L985.3,1032.7 L987.1,1028.3 L987.9,1023.8 L988.4,1019.3 L988.2,1014.7 L988.6,1010.1" fill="none" stroke="#8c7d8c" stroke-opacity="0.32" stroke-width="1.3" stroke-linejoin="round"/>
<path d="M1066.3,972.9 L1067.5,977.1 L1070.5,980.6 L1070.9,985.1 L1071.9,989.4 L1073.6,993.4 L1076.0,997.1 L1075.2,1001.9 L1074.4,1006.8" fill="none" stroke="#8c7d8c" stroke-opacity="0.32" stroke-width="1.3" stroke-linejoin="round"/>
<path d="M940.0,1055.4 L944.4,1054.7 L948.6,1053.1 L953.0,1052.2 L953.2,1056.8 L955.7,1060.9 L954.9,1065.6 L956.2,1070.0 L960.1,1071.0 L963.7,1073.0 L967.8,1073.2 L971.5,1075.0 L975.3,1076.2 L978.9,1078.1 L979.3,1082.1 L978.3,1086.2 L979.0,1090.2 L978.9,1094.3 L973.8,1094.6 L969.4,1096.9 L964.9,1099.3 L960.0,1100.0 L956.0,1099.3 L952.0,1099.1 L947.9,1099.7 L944.0,1098.3 L940.0,1098.0" fill="none" stroke="#8c7d8c" stroke-opacity="0.32" stroke-width="1.3" stroke-linejoin="round"/>
<path d="M978.9,1087.8 L982.8,1089.1 L986.2,1091.4 L990.0,1092.9 L993.3,1095.3 L996.7,1097.5 L999.3,1101.1 L1001.8,1104.7 L1005.3,1107.6 L1007.8,1111.3 L1010.9,1114.5 L1012.9,1118.5" fill="none" stroke="#8c7d8c" stroke-opacity="0.32" stroke-width="1.3" stroke-linejoin="round"/>
<path d="M1066.3,1105.6 L1070.1,1104.2 L1074.4,1103.9 L1077.6,1100.5 L1081.6,1099.9 L1085.7,1099.1 L1089.3,1101.8 L1093.6,1102.7 L1098.2,1103.1 L1101.9,1105.6 L1105.4,1108.9 L1107.6,1113.5 L1111.7,1116.3 L1114.8,1120.0" fill="none" stroke="#8c7d8c" stroke-opacity="0.32" stroke-width="1.3" stroke-linejoin="round"/>
<path d="M940.0,961.5 L944.0,960.4 L948.0,959.2 L952.0,958.2 L956.4,959.3 L960.3,957.6 L964.4,957.1 L968.4,955.9 L972.4,955.0 L975.8,958.1 L978.4,962.0 L982.1,964.8 L978.7,967.3 L975.2,969.6 L972.4,972.9 L968.2,974.1 L964.0,975.3 L960.3,977.9 L956.5,980.2 L952.5,981.8 L947.9,982.0 L944.4,985.0 L940.0,985.8" fill="none" stroke="#8c7d8c" stroke-opacity="0.32" stroke-width="1.3" stroke-linejoin="round"/>
<path d="M940.0,937.2 L942.9,933.9 L944.2,929.4 L947.3,926.2 L949.8,922.5 L953.0,919.4 L956.1,916.5 L958.5,913.2 L961.5,910.3 L962.5,905.8 L965.9,903.2 L964.3,900.0" fill="none" stroke="#8c7d8c" stroke-opacity="0.32" stroke-width="1.3" stroke-linejoin="round"/>
<path d="M965.9,919.4 L970.1,919.4 L973.4,922.3 L977.7,922.1 L981.2,924.0 L984.9,925.7 L988.6,927.2 L992.7,927.6 L996.5,928.9 L1000.7,928.8 L1004.2,931.1 L1008.0,932.4 L1014.5,935.6 L1009.7,937.5 L1004.5,938.0 L999.9,940.5 L999.6,944.5 L998.8,948.6 L999.5,952.7 L999.9,956.7 L998.0,960.7 L997.9,964.8 L998.8,968.9 L998.3,972.9 L999.6,976.9 L998.8,981.0 L999.1,985.0 L998.7,989.1 L999.4,993.1 L999.9,997.1" fill="none" stroke="#8c7d8c" stroke-opacity="0.32" stroke-width="1.3" stroke-linejoin="round"/>
<path d="M1008.0,932.4 L1008.7,928.1 L1010.1,924.0 L1011.9,920.0 L1011.1,915.3 L1012.9,911.3 L1010.6,907.8 L1008.5,904.3 L1008.0,900.0 L1007.9,904.9 L1007.0,909.6 L1004.7,914.0" fill="none" stroke="#8c7d8c" stroke-opacity="0.32" stroke-width="1.3" stroke-linejoin="round"/>
<path d="M1012.9,911.3 L1016.8,912.4 L1020.3,914.5 L1024.4,915.2 L1027.8,917.4 L1031.7,918.4 L1035.4,919.8 L1038.8,922.1 L1042.7,923.3 L1046.2,925.4 L1049.4,928.1 L1053.3,929.1 L1056.0,925.4 L1060.4,923.8 L1063.1,920.0 L1067.7,918.6 L1071.0,915.7 L1073.7,911.9 L1077.6,909.7 L1081.0,907.0 L1083.4,903.6 L1085.7,900.0 L1087.1,905.3" fill="none" stroke="#8c7d8c" stroke-opacity="0.32" stroke-width="1.3" stroke-linejoin="round"/>
<path d="M1014.5,935.6 L1016.5,939.3 L1020.2,941.5 L1022.6,944.8 L1024.9,948.3 L1028.9,950.2 L1031.1,953.7 L1033.9,956.7 L1032.1,960.7 L1030.7,964.8 L1030.2,969.1 L1033.3,972.9 L1033.9,977.1 L1033.9,981.4 L1033.3,985.7 L1033.9,989.9 L1035.5,993.9" fill="none" stroke="#8c7d8c" stroke-opacity="0.32" stroke-width="1.3" stroke-linejoin="round"/>
<path d="M1085.7,909.7 L1087.0,913.6 L1087.8,917.6 L1088.6,921.6 L1089.9,925.5 L1090.4,929.6 L1091.6,933.5 L1093.5,937.3 L1093.4,941.5 L1095.4,945.3 L1096.1,949.3 L1096.7,953.4 L1097.0,957.5" fill="none" stroke="#8c7d8c" stroke-opacity="0.32" stroke-width="1.3" stroke-linejoin="round"/>
<path d="M1161.0,984.2 L1156.3,985.7 L1152.0,988.4 L1146.9,988.6 L1142.4,990.7 L1140.8,994.6 L1137.4,997.4 L1137.0,1002.0 L1134.3,1005.2 L1137.1,1008.9 L1141.4,1011.1 L1143.2,1015.8 L1146.6,1018.8 L1150.5,1021.4 L1155.9,1021.2 L1161.0,1023.0" fill="none" stroke="#8c7d8c" stroke-opacity="0.32" stroke-width="1.3" stroke-linejoin="round"/>
<path d="M1148.8,932.4 L1152.7,934.9 L1155.1,938.7 L1158.7,941.4 L1161.0,945.3" fill="none" stroke="#8c7d8c" stroke-opacity="0.32" stroke-width="1.3" stroke-linejoin="round"/>
<path d="M977.8,1150.0 L977.8,1154.1 L978.4,1158.2 L977.4,1162.3 L978.5,1166.4 L977.9,1170.5 L976.6,1174.6 L977.8,1178.7 L976.8,1183.2 L974.3,1187.1 L971.5,1190.7 L970.0,1195.0" fill="none" stroke="#8c7d8c" stroke-opacity="0.32" stroke-width="1.3" stroke-linejoin="round"/>
<path d="M984.0,1178.7 L984.8,1182.8 L984.3,1187.0 L985.4,1191.1 L983.8,1195.3 L985.5,1199.4 L984.9,1203.6 L984.1,1207.8 L985.6,1211.9 L984.3,1216.1 L985.1,1220.2 L985.7,1224.3 L985.7,1228.5 L986.0,1232.6 L986.7,1236.7 L985.2,1241.0 L986.9,1245.0 L985.6,1249.3 L986.1,1253.4 L987.2,1257.5 L989.9,1260.8 L990.9,1264.7 L992.0,1268.7 L992.7,1272.8 L995.8,1275.9 L996.4,1280.0 L998.5,1283.5 L999.8,1287.4 L999.1,1291.8 L998.8,1296.3 L999.2,1300.7 L1000.7,1305.1 L999.3,1309.6 L1000.0,1314.0" fill="none" stroke="#8c7d8c" stroke-opacity="0.32" stroke-width="1.3" stroke-linejoin="round"/>
<path d="M1077.0,1100.0 L1075.3,1104.4 L1077.3,1109.1 L1075.1,1113.4 L1075.3,1118.0 L1073.6,1122.4 L1074.6,1127.0 L1073.9,1131.5 L1078.5,1133.2 L1083.5,1131.9 L1087.9,1134.6 L1092.8,1133.8 L1097.5,1134.6 L1099.4,1138.4 L1100.1,1142.6 L1100.6,1146.9 L1103.2,1150.5 L1103.4,1154.8 L1105.5,1158.6 L1105.4,1163.0 L1109.1,1165.4 L1111.9,1168.7 L1114.7,1172.0 L1117.5,1175.2 L1119.4,1179.2 L1123.0,1181.7 L1125.8,1185.0 L1128.6,1181.0 L1130.6,1176.6 L1132.4,1172.2 L1134.5,1167.9 L1135.3,1163.0" fill="none" stroke="#8c7d8c" stroke-opacity="0.32" stroke-width="1.3" stroke-linejoin="round"/>
<path d="M1113.2,1229.0 L1118.4,1229.9 L1123.6,1231.1 L1129.0,1230.7 L1133.0,1232.4 L1136.6,1234.9 L1140.3,1237.2 L1144.7,1238.1 L1148.4,1240.4 L1152.6,1241.7 L1157.1,1239.9 L1161.0,1237.0" fill="none" stroke="#8c7d8c" stroke-opacity="0.32" stroke-width="1.3" stroke-linejoin="round"/>
<path d="M1113.2,1229.0 L1111.5,1233.0 L1112.9,1237.4 L1111.1,1241.3 L1110.7,1245.5 L1110.0,1249.6 L1110.5,1254.0 L1113.5,1257.4 L1114.9,1261.4 L1116.4,1265.4 L1113.1,1267.8 L1110.3,1270.8 L1106.3,1272.4 L1103.2,1275.0 L1100.3,1278.0 L1097.5,1281.0" fill="none" stroke="#8c7d8c" stroke-opacity="0.32" stroke-width="1.3" stroke-linejoin="round"/>
<path d="M940.0,1257.5 L944.3,1258.1 L947.4,1261.8 L952.1,1261.4 L955.5,1264.4 L959.3,1266.2 L963.6,1267.0 L968.0,1266.0 L971.8,1263.4 L976.1,1261.9 L980.6,1261.2 L985.0,1260.2 L988.8,1257.5" fill="none" stroke="#8c7d8c" stroke-opacity="0.32" stroke-width="1.3" stroke-linejoin="round"/>
<path d="M835.8,1227.7 L832.8,1231.6 L831.9,1236.3 L830.2,1240.8 L828.2,1245.1 L824.5,1247.6 L820.6,1249.6 L816.6,1251.7 L813.9,1255.4 L810.5,1258.3 L806.5,1260.3 L802.4,1260.8 L798.2,1261.8 L794.0,1260.5 L789.8,1259.8 L785.8,1262.0 L781.6,1261.4 L780.5,1265.7 L781.5,1270.2 L779.2,1274.3 L779.7,1278.7 L779.4,1283.1" fill="none" stroke="#8c7d8c" stroke-opacity="0.32" stroke-width="1.3" stroke-linejoin="round"/>
<path d="M844.5,1261.4 L844.8,1266.2 L842.6,1270.5 L843.1,1275.3 L841.0,1279.6 L840.2,1284.2 L835.8,1284.4 L832.3,1287.5 L827.7,1287.2 L824.0,1289.4 L819.7,1290.2 L816.4,1293.7 L812.0,1293.9 L810.7,1290.0 L808.4,1286.6 L806.8,1282.9 L804.4,1279.6 L804.0,1275.3 L801.1,1272.2" fill="none" stroke="#8c7d8c" stroke-opacity="0.32" stroke-width="1.3" stroke-linejoin="round"/>
<path d="M844.5,1261.4 L848.8,1263.3 L853.5,1264.1 L857.4,1266.9 L861.4,1269.4 L866.2,1270.0 L868.9,1273.8 L869.4,1278.4 L871.2,1282.5 L872.9,1286.6 L873.1,1291.3 L874.4,1295.6 L877.1,1299.4" fill="none" stroke="#8c7d8c" stroke-opacity="0.32" stroke-width="1.3" stroke-linejoin="round"/>
<path d="M866.2,1270.0 L870.6,1269.7 L874.8,1272.0 L879.1,1272.5 L883.7,1270.5 L887.9,1272.2" fill="none" stroke="#8c7d8c" stroke-opacity="0.32" stroke-width="1.3" stroke-linejoin="round"/>
<path d="M900.9,1223.4 L905.1,1224.5 L908.9,1226.7 L913.2,1227.5 L916.7,1230.4 L921.1,1231.1 L925.2,1232.3 L929.1,1234.3 L930.0,1238.7 L932.0,1242.5 L933.7,1246.6 L936.0,1250.3 L938.9,1253.8 L940.0,1258.1" fill="none" stroke="#8c7d8c" stroke-opacity="0.32" stroke-width="1.3" stroke-linejoin="round"/>
<path d="M766.4,1249.4 L771.0,1248.1 L775.6,1246.9 L780.3,1246.3 L784.5,1243.8 L789.2,1242.9 L788.0,1247.4 L785.5,1251.4 L784.4,1256.0 L782.7,1260.3 L779.2,1262.5 L775.5,1264.3 L771.9,1266.3 L768.5,1268.6 L764.3,1269.4 L760.3,1270.6 L756.9,1273.0 L753.3,1275.0 L750.0,1277.5 L746.2,1279.2 L742.5,1280.9" fill="none" stroke="#8c7d8c" stroke-opacity="0.32" stroke-width="1.3" stroke-linejoin="round"/>
<path d="M539.2,921.9 L542.0,925.3 L546.6,926.1 L548.8,930.2 L553.3,931.1 L556.4,934.1 L559.8,936.6 L562.3,940.3 L566.5,942.2 L569.4,945.5 L573.2,947.8 L575.0,952.2 L579.0,954.3 L582.9,957.4 L588.1,957.4 L592.2,960.1 L596.5,961.0 L599.9,963.6 L603.7,965.5 L607.3,967.9 L611.4,969.0 L616.4,969.6 L621.2,971.2 L626.1,971.9 L629.7,974.2 L632.5,977.3 L635.7,980.0 L637.8,983.8 L640.7,986.8 L643.8,989.6 L647.7,986.1 L651.1,982.2 L650.3,986.7 L652.4,991.0 L652.6,995.4 L652.6,999.9 L657.0,998.7 L661.7,998.8 L665.8,996.1 L670.3,995.5 L677.6,997.0" fill="none" stroke="#8c7d8c" stroke-opacity="0.32" stroke-width="1.3" stroke-linejoin="round"/>
<path d="M523.0,969.0 L526.6,966.9 L530.1,964.6 L534.6,964.0 L537.7,961.1 L540.9,958.2 L545.1,957.2 L552.5,960.1" fill="none" stroke="#8c7d8c" stroke-opacity="0.32" stroke-width="1.3" stroke-linejoin="round"/>
<path d="M542.1,889.5 L546.2,890.2 L550.1,891.3 L554.3,891.4 L558.1,893.5 L562.6,891.9 L566.2,895.1 L570.4,895.1 L574.5,895.3 L578.5,892.4 L582.0,889.0 L584.9,885.0 L588.5,882.3 L593.1,881.8 L596.6,879.1 L597.2,883.1 L599.5,886.7 L599.6,890.9 L604.2,892.1 L609.0,891.3 L613.7,892.4 L618.5,891.0 L623.1,892.4 L626.1,896.8 L630.0,894.7 L632.8,890.8 L636.5,888.5 L640.3,886.1 L643.9,883.6 L648.2,882.1 L655.5,885.0 L659.3,882.6 L662.5,879.3 L666.1,876.6 L670.3,874.7 L675.4,874.5 L680.2,873.5 L685.0,871.8" fill="none" stroke="#8c7d8c" stroke-opacity="0.32" stroke-width="1.3" stroke-linejoin="round"/>
<path d="M661.4,923.3 L661.6,927.5 L662.0,931.7 L660.5,935.8 L661.5,940.0 L661.3,944.2 L661.4,948.4 L666.1,949.1 L670.9,949.1 L675.5,950.5 L680.2,951.8 L685.0,951.3" fill="none" stroke="#8c7d8c" stroke-opacity="0.32" stroke-width="1.3" stroke-linejoin="round"/>
<path d="M646.7,952.8 L647.8,956.8 L646.9,960.8 L647.4,964.8 L646.8,968.8 L647.3,972.8 L645.8,976.8 L646.7,980.8 L651.1,981.0 L655.5,980.8" fill="none" stroke="#8c7d8c" stroke-opacity="0.32" stroke-width="1.3" stroke-linejoin="round"/>
<path d="M567.2,992.5 L571.5,991.8 L575.5,994.0 L579.7,995.0 L584.0,994.0 L588.1,995.8 L592.4,994.9 L596.6,995.5 L600.1,998.3 L603.4,1001.5 L608.1,1002.6 L611.4,1005.8 L615.9,1007.3 L619.6,1010.0 L623.1,1013.2 L628.1,1014.3 L632.0,1017.5 L636.8,1018.9 L640.8,1022.0 L642.2,1026.1 L642.0,1030.4 L642.1,1034.6 L641.1,1039.0 L643.7,1043.0 L642.4,1047.4 L642.1,1051.6 L642.9,1055.8 L643.8,1060.0" fill="none" stroke="#8c7d8c" stroke-opacity="0.32" stroke-width="1.3" stroke-linejoin="round"/>
<path d="M643.8,1001.4 L648.4,1001.0 L652.9,1000.6 L657.2,999.1 L661.7,998.5 L665.7,995.5 L670.3,995.5 L674.7,995.5" fill="none" stroke="#8c7d8c" stroke-opacity="0.32" stroke-width="1.3" stroke-linejoin="round"/>
<path d="M680.6,1001.4 L680.4,1005.6 L682.2,1009.6 L682.3,1013.7 L681.4,1017.9 L682.0,1022.0 L678.3,1024.8 L673.6,1026.0 L670.3,1029.4" fill="none" stroke="#8c7d8c" stroke-opacity="0.32" stroke-width="1.3" stroke-linejoin="round"/>
<path d="M581.9,995.5 L581.4,1000.3 L583.6,1004.8 L583.8,1009.6 L585.2,1014.2 L584.9,1019.0 L588.8,1020.9 L593.3,1019.3 L597.2,1021.2 L601.3,1021.7 L605.5,1022.0 L608.9,1018.7 L611.2,1014.5 L614.1,1010.8 L617.3,1007.3" fill="none" stroke="#8c7d8c" stroke-opacity="0.32" stroke-width="1.3" stroke-linejoin="round"/>
<path d="M545.1,1022.0 L549.5,1021.5 L553.9,1022.3 L558.4,1020.7 L562.8,1023.3 L567.2,1022.0 L567.3,1026.6 L567.7,1031.1 L570.4,1035.1 L571.5,1039.5 L571.6,1044.1" fill="none" stroke="#8c7d8c" stroke-opacity="0.32" stroke-width="1.3" stroke-linejoin="round"/>
<path d="M621.2,1055.3 L625.5,1052.3 L630.7,1051.6 L635.3,1049.4 L639.9,1045.5 L642.4,1040.0" fill="none" stroke="#8c7d8c" stroke-opacity="0.32" stroke-width="1.3" stroke-linejoin="round"/>
<path d="M643.6,1040.0 L644.4,1044.7 L644.1,1049.4 L644.2,1054.1 L644.7,1058.8 L644.8,1063.5 L644.3,1067.7 L644.4,1072.0 L644.0,1076.2 L644.6,1080.5 L644.6,1084.8 L644.0,1089.0 L642.4,1093.2 L644.1,1097.6 L643.0,1101.8 L642.4,1106.0 L637.8,1108.5 L633.0,1110.6" fill="none" stroke="#8c7d8c" stroke-opacity="0.32" stroke-width="1.3" stroke-linejoin="round"/>
<path d="M649.5,1068.3 L653.7,1068.9 L657.8,1067.7 L661.8,1066.3 L666.0,1067.0 L666.5,1071.6 L665.5,1076.0 L663.6,1080.3 L663.0,1084.8 L663.6,1089.4 L659.0,1090.6 L654.2,1091.1 L649.5,1091.8" fill="none" stroke="#8c7d8c" stroke-opacity="0.32" stroke-width="1.3" stroke-linejoin="round"/>
<path d="M666.0,1067.0 L670.4,1067.5 L674.8,1068.0 L679.4,1067.6 L683.6,1069.4 L686.2,1065.0 L687.9,1060.2 L689.5,1055.3 L693.6,1053.7 L697.3,1051.3 L701.3,1049.4 L700.6,1044.6 L699.0,1040.0" fill="none" stroke="#8c7d8c" stroke-opacity="0.32" stroke-width="1.3" stroke-linejoin="round"/>
<path d="M662.4,1091.8 L662.0,1096.2 L659.7,1100.2 L660.1,1104.7 L664.5,1104.3 L668.7,1105.0 L673.0,1105.9 L673.2,1110.0 L673.7,1114.2 L673.5,1118.3 L673.0,1122.4" fill="none" stroke="#8c7d8c" stroke-opacity="0.32" stroke-width="1.3" stroke-linejoin="round"/>
<path d="M656.5,1040.0 L656.9,1044.6 L659.3,1048.7 L660.7,1053.1 L661.2,1057.7 L665.0,1060.5 L669.9,1060.9 L673.6,1063.8 L677.7,1065.9 L679.5,1069.5 L681.4,1073.1 L683.6,1076.5 L684.9,1081.1 L684.1,1085.9 L684.8,1090.6" fill="none" stroke="#8c7d8c" stroke-opacity="0.32" stroke-width="1.3" stroke-linejoin="round"/>
<path d="M692.2,828.9 L696.8,829.7 L701.5,827.8 L706.1,828.9 L710.5,830.7 L715.2,830.9 L719.9,831.0" fill="none" stroke="#8c7d8c" stroke-opacity="0.32" stroke-width="1.3" stroke-linejoin="round"/>
<path d="M699.2,831.0 L697.1,835.0 L693.6,837.9 L689.7,841.7 L685.3,844.8 L685.3,849.1 L684.1,853.2 L682.6,857.2 L682.1,862.4 L682.6,867.6 L681.3,873.1 L678.4,878.0" fill="none" stroke="#8c7d8c" stroke-opacity="0.32" stroke-width="1.3" stroke-linejoin="round"/>
<path d="M713.0,837.9 L716.3,842.1 L718.5,846.9 L721.7,849.7 L724.6,852.8 L728.2,855.2 L727.7,859.9 L729.6,864.2 L732.0,869.2 L733.7,874.5 L738.1,875.7 L742.5,876.5 L746.8,878.1 L751.0,880.0 L755.3,881.5 L760.0,881.4" fill="none" stroke="#8c7d8c" stroke-opacity="0.32" stroke-width="1.3" stroke-linejoin="round"/>
<path d="M744.1,864.2 L748.1,862.5 L752.0,860.6 L756.1,859.1 L760.0,857.2" fill="none" stroke="#8c7d8c" stroke-opacity="0.32" stroke-width="1.3" stroke-linejoin="round"/>
<path d="M550.6,813.5 L551.0,817.8 L549.7,822.0 L549.1,826.2 L547.5,830.3 L548.2,834.7 L545.4,838.5 L543.4,842.6 L541.6,846.9 L540.0,851.2" fill="none" stroke="#8c7d8c" stroke-opacity="0.32" stroke-width="1.3" stroke-linejoin="round"/>
<path d="M596.5,844.1 L600.7,843.9 L604.9,844.7 L609.1,842.5 L613.3,843.1 L617.5,842.1 L621.7,843.5 L625.9,842.9 L630.3,845.0 L634.0,848.0 L637.6,851.2" fill="none" stroke="#8c7d8c" stroke-opacity="0.32" stroke-width="1.3" stroke-linejoin="round"/>
<path d="M684.7,827.6 L687.4,831.9 L690.1,836.1 L694.1,839.4 L693.9,844.1 L692.6,848.5 L688.8,852.1 L689.2,857.0 L688.1,861.4 L686.0,865.5 L684.7,869.9" fill="none" stroke="#8c7d8c" stroke-opacity="0.32" stroke-width="1.3" stroke-linejoin="round"/>
<path d="M753.0,1005.0 L757.5,1006.0 L761.4,1008.8 L766.1,1009.3 L770.0,1012.0 L774.5,1010.5 L777.6,1006.5 L781.9,1004.7 L786.4,1003.0 L790.0,1000.0 L794.1,997.4 L796.8,993.5 L800.0,990.0" fill="none" stroke="#8c7d8c" stroke-opacity="0.32" stroke-width="1.3" stroke-linejoin="round"/>
<path d="M700.0,1012.0 L704.2,1014.7 L709.5,1014.9 L713.1,1018.8 L718.0,1020.0 L722.3,1018.0 L726.6,1015.8 L731.1,1014.4 L736.0,1014.0" fill="none" stroke="#8c7d8c" stroke-opacity="0.32" stroke-width="1.3" stroke-linejoin="round"/>
<path d="M523.0,792.4 L527.0,791.3 L531.2,791.5 L535.3,791.2 L539.3,791.8 L543.3,791.8 L547.3,791.9 L551.3,791.4 L555.3,792.2 L559.3,791.7 L563.3,790.9 L567.3,791.8 L571.3,791.0 L575.3,792.9 L579.3,793.0 L583.3,791.8 L587.3,791.9 L591.3,792.9 L595.3,792.4 L599.9,791.2 L604.7,791.2 L609.1,792.0 L613.4,793.4 L617.5,795.1 L621.6,797.0 L625.9,798.2 L633.0,799.4 L635.5,802.8 L639.6,804.4 L642.4,807.6 L644.7,812.4 L647.6,815.4 L651.5,816.9 L655.0,819.0 L659.7,820.1 L664.5,820.1 L669.3,819.1 L674.0,820.0 L678.5,820.2 L683.1,819.0 L687.6,818.7 L692.1,819.4 L696.7,820.0 L701.2,819.4 L704.9,820.9 L708.9,821.7 L712.2,824.3 L715.9,825.9 L719.9,826.5 L724.0,826.6 L728.0,827.5 L731.9,828.5 L736.0,828.8 L740.5,829.2 L744.8,828.0 L747.6,824.7 L751.5,822.6 L755.4,820.5 L758.1,817.0 L762.3,815.7 L766.5,814.5 L770.6,813.1 L774.6,811.2 L778.7,809.7 L782.7,809.3 L786.7,809.9 L790.7,809.8 L794.7,809.4 L798.7,810.4 L802.7,809.4 L806.7,809.7 L810.8,811.4 L814.7,813.7 L818.8,815.6 L822.9,817.5 L827.3,818.5 L831.7,819.3 L836.2,819.0 L840.5,820.0 L844.3,816.8 L847.8,813.2 L850.8,809.3 L853.8,805.3 L857.7,803.9 L861.2,801.6 L864.8,799.7 L868.5,797.9 L874.4,797.7 L880.2,797.2" fill="none" stroke="#86729a" stroke-opacity="0.44" stroke-width="2" stroke-linejoin="round"/>
<path d="M918.5,714.0 L915.6,716.8 L913.3,720.3 L909.4,722.2 L906.7,725.2 L904.5,728.7 L901.5,731.4 L899.3,735.0 L896.5,737.9 L893.6,740.8 L890.5,743.4 L888.3,746.9 L887.4,751.1 L884.2,754.1 L883.2,758.2 L881.0,762.6 L877.8,766.4 L874.4,769.9 L876.2,774.3 L875.8,779.1 L877.6,783.5 L878.3,788.1 L879.6,792.6 L880.2,797.2 L881.9,801.5 L884.3,805.5 L886.1,809.7 L889.5,812.8 L892.1,816.5 L895.0,820.0" fill="none" stroke="#86729a" stroke-opacity="0.44" stroke-width="2" stroke-linejoin="round"/>
<path d="M523.0,852.0 L527.9,855.5 L531.8,860.0 L532.6,864.9 L534.4,869.7 L534.8,874.7 L536.2,878.6 L538.2,882.2 L540.4,885.7 L542.0,889.5 L542.5,894.3 L543.4,899.1 L545.2,903.7 L545.0,908.6 L543.1,912.2 L541.1,915.8 L539.5,919.6 L537.7,923.3 L535.0,927.4 L533.3,932.0 L531.8,936.6 L529.1,940.7 L526.4,944.8 L523.0,948.4" fill="none" stroke="#86729a" stroke-opacity="0.44" stroke-width="2" stroke-linejoin="round"/>
<path d="M523.0,737.6 L527.1,738.8 L531.2,737.9 L535.3,738.2 L539.1,735.3 L542.7,732.1 L545.5,728.1 L549.4,725.3 L549.8,719.5 L551.8,714.0" fill="none" stroke="#86729a" stroke-opacity="0.44" stroke-width="2" stroke-linejoin="round"/>
<path d="M523.0,1058.5 L527.1,1059.4 L531.2,1059.1 L535.3,1058.8 L539.4,1057.7 L543.6,1057.9 L547.7,1058.6 L551.8,1058.7 L555.9,1057.1 L560.0,1058.0 L564.2,1058.9 L567.6,1061.7 L571.8,1062.5 L575.4,1064.6 L577.9,1068.1 L581.2,1070.5 L583.9,1074.7 L585.7,1079.3 L588.3,1083.5 L588.8,1088.1 L590.5,1092.3 L592.0,1096.6 L593.0,1101.0 L595.3,1104.8 L596.6,1109.0 L598.8,1112.8 L601.4,1116.9 L604.5,1120.6 L607.1,1124.6 L611.1,1126.9 L614.9,1129.4 L618.9,1131.7 L623.6,1131.0 L628.3,1130.6 L633.0,1131.1 L637.7,1129.9 L642.4,1130.5 L647.1,1130.5 L651.9,1130.6 L656.6,1130.4 L661.3,1129.0 L666.0,1129.3 L670.7,1128.9 L675.4,1129.7 L680.1,1128.3 L684.9,1129.3 L689.5,1128.1 L694.5,1126.3 L699.9,1126.4 L704.8,1124.6" fill="none" stroke="#86729a" stroke-opacity="0.44" stroke-width="2" stroke-linejoin="round"/>
<path d="M696.6,1148.3 L699.8,1145.2 L701.6,1141.1 L704.9,1138.1 L707.1,1134.2 L711.4,1135.7 L716.0,1135.0 L720.3,1136.5 L724.8,1136.5 L728.9,1139.4 L733.1,1142.3 L736.6,1146.0 L737.8,1153.0 L737.2,1157.1 L735.4,1160.9 L735.0,1165.0 L730.1,1166.7 L724.9,1166.7 L720.0,1168.0 L715.3,1168.0 L710.6,1168.0 L706.0,1167.0 L702.8,1163.1 L699.6,1159.1 L696.6,1155.0 L696.6,1148.3" fill="none" stroke="#86729a" stroke-opacity="0.44" stroke-width="2" stroke-linejoin="round"/>
<path d="M745.0,1140.0 L746.4,1144.4 L747.8,1148.8 L751.1,1152.4 L752.0,1157.0 L752.1,1161.5 L753.4,1165.8 L755.0,1170.0 L755.1,1174.4 L752.9,1178.4 L752.2,1182.6 L752.0,1187.0 L752.0,1191.4 L749.7,1195.5 L750.0,1200.0 L748.9,1205.1 L747.4,1210.0 L746.0,1215.0 L744.7,1219.1 L743.6,1223.3 L742.5,1227.5 L742.4,1231.9 L741.0,1236.0" fill="none" stroke="#86729a" stroke-opacity="0.44" stroke-width="2" stroke-linejoin="round"/>
<path d="M736.0,1234.3 L740.3,1233.2 L744.7,1233.2 L750.0,1235.5 L755.5,1237.5 L759.7,1238.2 L763.8,1237.4 L767.9,1236.9 L772.1,1236.3 L776.2,1235.8 L780.4,1237.3 L784.5,1236.6 L788.6,1235.4 L792.8,1235.9 L797.0,1235.9 L801.1,1235.3 L801.9,1230.8 L800.7,1226.3 L800.7,1221.9 L800.5,1217.4 L801.3,1212.9 L801.9,1208.5 L801.6,1204.0 L801.1,1199.5 L803.3,1194.1" fill="none" stroke="#86729a" stroke-opacity="0.44" stroke-width="2" stroke-linejoin="round"/>
<path d="M864.0,1227.7 L866.2,1223.4 L863.9,1218.2 L863.0,1212.6 L865.4,1208.1 L867.3,1203.4 L868.4,1198.4 L866.2,1194.1" fill="none" stroke="#86729a" stroke-opacity="0.44" stroke-width="2" stroke-linejoin="round"/>
<path d="M864.0,1227.7 L867.9,1226.2 L871.9,1225.5 L876.0,1224.5 L879.7,1222.6 L883.9,1222.3 L887.9,1221.2 L892.1,1222.8 L896.5,1222.8 L900.9,1223.4 L903.0,1227.8 L904.7,1232.4 L907.5,1236.4 L909.6,1240.8 L906.6,1243.8 L902.7,1245.5 L900.2,1249.1 L896.1,1250.6 L893.3,1253.8 L890.8,1257.1 L889.6,1261.0 L887.9,1264.6 L888.4,1270.1 L889.0,1275.5 L892.8,1277.8 L896.0,1280.8 L898.8,1284.2 L904.0,1286.9 L909.6,1288.5 L908.8,1292.7 L908.6,1297.0 L909.2,1301.3 L907.7,1305.5 L906.8,1309.7 L907.4,1314.0" fill="none" stroke="#86729a" stroke-opacity="0.44" stroke-width="2" stroke-linejoin="round"/>
<path d="M948.1,1013.3 L952.3,1013.4 L956.2,1011.5 L960.4,1011.5 L964.3,1010.1 L967.7,1007.3 L971.6,1005.2 L975.0,1002.4 L978.9,1000.4 L982.1,1003.7 L986.0,1006.3 L988.6,1010.1 L992.7,1008.1 L996.8,1006.0 L1000.7,1003.7 L1005.5,1003.2 L1009.7,1001.6 L1013.3,998.3 L1017.7,997.1 L1021.8,997.0 L1025.8,996.4 L1029.8,995.8 L1033.9,995.7 L1038.0,995.4 L1042.0,994.3 L1046.0,994.0 L1050.1,993.9 L1052.8,990.4 L1056.3,987.5 L1058.9,983.9 L1061.3,980.2 L1063.5,976.3 L1066.3,972.9 L1063.7,968.3 L1059.8,964.8 L1066.3,960.7 L1070.8,961.2 L1075.2,960.5 L1079.4,958.7 L1083.8,958.7 L1088.2,957.9 L1092.6,957.9 L1097.0,957.5 L1101.7,956.7 L1105.9,954.6 L1110.2,952.9 L1114.8,951.8 L1117.6,948.3 L1120.8,945.2 L1125.0,943.2 L1128.4,940.3 L1131.5,937.2 L1133.5,932.9 L1137.1,930.2 L1140.7,927.5 L1142.8,923.6 L1146.0,920.5 L1148.3,916.6 L1151.5,913.5 L1154.1,909.9 L1156.9,906.5 L1161.0,900.0" fill="none" stroke="#86729a" stroke-opacity="0.44" stroke-width="2" stroke-linejoin="round"/>
<path d="M940.0,1141.0 L944.5,1140.9 L948.7,1139.0 L953.3,1139.7 L957.5,1138.1 L961.9,1137.2 L966.3,1137.0 L970.5,1135.4 L974.9,1134.7 L979.4,1134.6 L983.4,1135.6 L987.4,1136.4 L991.1,1138.5 L995.2,1139.1 L999.2,1140.3 L1003.2,1141.2 L1007.1,1142.3 L1010.9,1144.0 L1015.1,1144.6 L1019.3,1145.2 L1023.5,1144.3 L1027.7,1145.4 L1031.9,1144.6 L1036.1,1145.7 L1040.3,1144.8 L1044.5,1145.6 L1048.7,1145.7 L1049.2,1149.7 L1048.6,1153.9 L1049.1,1157.9 L1050.7,1161.9 L1050.2,1166.0 L1048.9,1169.9 L1046.3,1173.2 L1044.8,1177.0 L1042.8,1180.5 L1039.6,1183.4 L1037.7,1186.9 L1037.3,1191.4 L1034.5,1194.5 L1034.9,1198.9 L1033.1,1203.0 L1031.9,1207.3 L1031.4,1211.6 L1031.3,1215.9 L1030.6,1220.2 L1030.5,1224.5 L1029.9,1228.8 L1028.6,1233.0 L1029.6,1237.5 L1028.2,1241.7 L1027.0,1245.6 L1026.2,1249.5 L1026.5,1253.7 L1025.0,1257.5 L1023.8,1261.7 L1024.3,1266.1 L1022.1,1270.2 L1021.8,1274.5 L1021.7,1278.9 L1020.8,1283.1 L1020.3,1287.4 L1019.1,1291.8 L1020.1,1296.3 L1020.2,1300.7 L1019.1,1305.1 L1018.4,1309.5 L1019.0,1314.0" fill="none" stroke="#86729a" stroke-opacity="0.44" stroke-width="2" stroke-linejoin="round"/>
<path d="M1049.0,1122.0 L1052.3,1119.1 L1055.8,1116.5 L1059.1,1113.6 L1062.5,1110.8 L1066.1,1108.2 L1069.2,1105.1 L1071.7,1101.4 L1075.5,1099.0 L1080.0,1099.0 L1084.3,1100.0 L1088.7,1100.3 L1093.0,1102.0 L1097.5,1101.6 L1100.3,1104.8 L1103.8,1107.2 L1107.1,1109.8 L1110.4,1112.5 L1113.2,1115.7 L1117.1,1117.2 L1120.8,1119.1 L1125.3,1119.0 L1129.0,1120.9 L1133.0,1122.0 L1136.9,1123.6 L1140.9,1124.1 L1145.0,1123.6 L1149.0,1123.5 L1152.9,1125.0 L1157.0,1124.5 L1161.0,1125.2" fill="none" stroke="#86729a" stroke-opacity="0.44" stroke-width="2" stroke-linejoin="round"/>
<path d="M1050.2,1120.5 L1050.9,1124.8 L1049.0,1128.9 L1049.0,1133.1 L1050.2,1137.4 L1048.9,1141.5 L1048.7,1145.7" fill="none" stroke="#86729a" stroke-opacity="0.44" stroke-width="2" stroke-linejoin="round"/>
<rect x="622" y="1230" width="66" height="12" rx="6" transform="rotate(-66 655 1236)" fill="none" stroke="#bcadc3" stroke-width="1.6"/>
<text x="725" y="752" font-size="14.8" font-style="italic" fill="#9d8fb1" stroke="#fff" stroke-width="2.5" stroke-opacity="0.6" paint-order="stroke" font-family="Liberation Sans">Zinder</text>
<text x="848" y="740" font-size="14.8" font-style="italic" fill="#9d8fb1" stroke="#fff" stroke-width="2.5" stroke-opacity="0.6" paint-order="stroke" font-family="Liberation Sans">Diffa</text>
<text x="892" y="757.5" font-size="14.8" font-style="italic" fill="#9d8fb1" stroke="#fff" stroke-width="2.5" stroke-opacity="0.6" paint-order="stroke" font-family="Liberation Sans">Kanem كانم</text>
<text x="1019" y="777" font-size="14.8" font-style="italic" fill="#9d8fb1" stroke="#fff" stroke-width="2.5" stroke-opacity="0.6" paint-order="stroke" font-family="Liberation Sans">Batha البطحة</text>
<text x="593" y="941" font-size="14.8" font-style="italic" fill="#9d8fb1" stroke="#fff" stroke-width="2.5" stroke-opacity="0.6" paint-order="stroke" font-family="Liberation Sans">Niger</text>
<text x="854" y="867" font-size="14.8" font-style="italic" fill="#9d8fb1" stroke="#fff" stroke-width="2.5" stroke-opacity="0.6" paint-order="stroke" font-family="Liberation Sans">Borno</text>
<text x="1038" y="1274" font-size="14.8" font-style="italic" fill="#9d8fb1" stroke="#fff" stroke-width="2.5" stroke-opacity="0.6" paint-order="stroke" font-family="Liberation Sans">Équateur</text>
<text x="1128" y="1289" font-size="14.8" font-style="italic" fill="#9d8fb1" stroke="#fff" stroke-width="2.5" stroke-opacity="0.6" paint-order="stroke" font-family="Liberation Sans">Tshuapa</text>
<text x="1002" y="743" font-size="18" fill="#917fa3" letter-spacing="1" stroke="#fff" stroke-width="3" stroke-opacity="0.6" paint-order="stroke" font-family="Liberation Sans">Tchad تشاد</text>
<text x="649" y="969" font-size="18" fill="#917fa3" letter-spacing="1" stroke="#fff" stroke-width="3" stroke-opacity="0.6" paint-order="stroke" font-family="Liberation Sans">Nigeria</text>
<text x="1067" y="1018" font-size="18" fill="#917fa3" letter-spacing="1" stroke="#fff" stroke-width="3" stroke-opacity="0.6" paint-order="stroke" font-family="Liberation Sans">Ködörösêse</text>
<text x="1067" y="1039" font-size="18" fill="#917fa3" letter-spacing="1" stroke="#fff" stroke-width="3" stroke-opacity="0.6" paint-order="stroke" font-family="Liberation Sans">tî Bêafrîka</text>
<text x="1068" y="1062" font-size="18" fill="#917fa3" letter-spacing="1" stroke="#fff" stroke-width="3" stroke-opacity="0.6" paint-order="stroke" font-family="Liberation Sans">République</text>
<text x="1057" y="1084" font-size="18" fill="#917fa3" letter-spacing="1" stroke="#fff" stroke-width="3" stroke-opacity="0.6" paint-order="stroke" font-family="Liberation Sans">centrafricaine</text>
<text x="834" y="1024" font-size="18" fill="#917fa3" letter-spacing="1" stroke="#fff" stroke-width="3" stroke-opacity="0.6" paint-order="stroke" font-family="Liberation Sans">Cameroun</text>
<text x="688" y="1223" font-size="18" fill="#917fa3" letter-spacing="0.8" stroke="#fff" stroke-width="3" stroke-opacity="0.6" paint-order="stroke" font-family="Liberation Sans">Guinea Ecuatorial</text>
<text x="779" y="1307" font-size="18" fill="#917fa3" letter-spacing="1" stroke="#fff" stroke-width="3" stroke-opacity="0.6" paint-order="stroke" font-family="Liberation Sans">Gabon</text>
<text x="571" y="716" font-size="17" fill="#4a4a4a" stroke="#fff" stroke-width="3" stroke-opacity="0.75" paint-order="stroke" font-family="Liberation Sans">Tahoua</text>
<text x="647" y="817" font-size="17" fill="#4a4a4a" stroke="#fff" stroke-width="3" stroke-opacity="0.75" paint-order="stroke" font-family="Liberation Sans">Katsina</text>
<circle cx="674.5" cy="823.7" r="2.6" fill="#fff" stroke="#8a8a8a" stroke-width="1.2"/>
<text x="568" y="839" font-size="17" fill="#4a4a4a" stroke="#fff" stroke-width="3" stroke-opacity="0.75" paint-order="stroke" font-family="Liberation Sans">Sokoto</text>
<circle cx="594" cy="819.7" r="2.6" fill="#fff" stroke="#8a8a8a" stroke-width="1.2"/>
<text x="688" y="876" font-size="17" fill="#4a4a4a" stroke="#fff" stroke-width="3" stroke-opacity="0.75" paint-order="stroke" font-family="Liberation Sans">Kano</text>
<circle cx="706" cy="857.5" r="2.6" fill="#fff" stroke="#8a8a8a" stroke-width="1.2"/>
<text x="605" y="915" font-size="17" fill="#4a4a4a" stroke="#fff" stroke-width="3" stroke-opacity="0.75" paint-order="stroke" font-family="Liberation Sans">Kaduna</text>
<circle cx="668.3" cy="909" r="2.6" fill="#fff" stroke="#8a8a8a" stroke-width="1.2"/>
<text x="708" y="923" font-size="17" fill="#4a4a4a" stroke="#fff" stroke-width="3" stroke-opacity="0.75" paint-order="stroke" font-family="Liberation Sans">Jos</text>
<circle cx="718" cy="929.6" r="2.6" fill="#fff" stroke="#8a8a8a" stroke-width="1.2"/>
<text x="758" y="922" font-size="17" fill="#4a4a4a" stroke="#fff" stroke-width="3" stroke-opacity="0.75" paint-order="stroke" font-family="Liberation Sans">Bauchi</text>
<circle cx="750.7" cy="916.4" r="2.6" fill="#fff" stroke="#8a8a8a" stroke-width="1.2"/>
<text x="550" y="973" font-size="17" fill="#4a4a4a" stroke="#fff" stroke-width="3" stroke-opacity="0.75" paint-order="stroke" font-family="Liberation Sans">Ìlọrin</text>
<circle cx="569.7" cy="979.3" r="2.6" fill="#fff" stroke="#8a8a8a" stroke-width="1.2"/>
<text x="676" y="999" font-size="17" fill="#4a4a4a" stroke="#fff" stroke-width="3" stroke-opacity="0.75" paint-order="stroke" font-family="Liberation Sans">Makurdi</text>
<circle cx="706" cy="1005.8" r="2.6" fill="#fff" stroke="#8a8a8a" stroke-width="1.2"/>
<text x="520" y="1010" font-size="17" fill="#4a4a4a" stroke="#fff" stroke-width="3" stroke-opacity="0.75" paint-order="stroke" font-family="Liberation Sans">Ìbàdàn</text>
<circle cx="548.3" cy="1017.7" r="2.6" fill="#fff" stroke="#8a8a8a" stroke-width="1.2"/>
<text x="508" y="1053" font-size="17" fill="#4a4a4a" stroke="#fff" stroke-width="3" stroke-opacity="0.75" paint-order="stroke" font-family="Liberation Sans">Porto-Novo</text>
<text x="647" y="1044" font-size="17" fill="#4a4a4a" stroke="#fff" stroke-width="3" stroke-opacity="0.75" paint-order="stroke" font-family="Liberation Sans">Enugu</text>
<circle cx="671.9" cy="1049.5" r="2.6" fill="#fff" stroke="#8a8a8a" stroke-width="1.2"/>
<text x="725" y="1060" font-size="17" fill="#4a4a4a" stroke="#fff" stroke-width="3" stroke-opacity="0.75" paint-order="stroke" font-family="Liberation Sans">Bamenda</text>
<circle cx="761.4" cy="1066" r="2.6" fill="#fff" stroke="#8a8a8a" stroke-width="1.2"/>
<text x="591" y="1098" font-size="17" fill="#4a4a4a" stroke="#fff" stroke-width="3" stroke-opacity="0.75" paint-order="stroke" font-family="Liberation Sans">Warri</text>
<circle cx="611.8" cy="1081.3" r="2.6" fill="#fff" stroke="#8a8a8a" stroke-width="1.2"/>
<text x="671" y="1092" font-size="17" fill="#4a4a4a" stroke="#fff" stroke-width="3" stroke-opacity="0.75" paint-order="stroke" font-family="Liberation Sans">Uyo</text>
<circle cx="684.9" cy="1097.7" r="2.6" fill="#fff" stroke="#8a8a8a" stroke-width="1.2"/>
<text x="602" y="1125" font-size="17" fill="#4a4a4a" stroke="#fff" stroke-width="3" stroke-opacity="0.75" paint-order="stroke" font-family="Liberation Sans">Port Harcourt</text>
<circle cx="655.4" cy="1107.2" r="2.6" fill="#fff" stroke="#8a8a8a" stroke-width="1.2"/>
<text x="686" y="1164" font-size="17" fill="#4a4a4a" stroke="#fff" stroke-width="3" stroke-opacity="0.75" paint-order="stroke" font-family="Liberation Sans">Malabo</text>
<circle cx="715" cy="1143" r="4" fill="#fff" stroke="#666" stroke-width="1.3"/><circle cx="715" cy="1143" r="1.5" fill="#666"/>
<text x="775" y="1128" font-size="17" fill="#4a4a4a" stroke="#fff" stroke-width="3" stroke-opacity="0.75" paint-order="stroke" font-family="Liberation Sans">Yaoundé</text>
<circle cx="807.3" cy="1137.8" r="4" fill="#fff" stroke="#666" stroke-width="1.3"/><circle cx="807.3" cy="1137.8" r="1.5" fill="#666"/>
<text x="764" y="1188" font-size="17" fill="#4a4a4a" stroke="#fff" stroke-width="3" stroke-opacity="0.75" paint-order="stroke" font-family="Liberation Sans">Ebolowa</text>
<circle cx="795.5" cy="1170.7" r="2.6" fill="#fff" stroke="#8a8a8a" stroke-width="1.2"/>
<text x="607" y="1280" font-size="17" fill="#4a4a4a" stroke="#fff" stroke-width="3" stroke-opacity="0.75" paint-order="stroke" font-family="Liberation Sans">São Tomé</text>
<circle cx="644.4" cy="1257.9" r="4" fill="#fff" stroke="#666" stroke-width="1.3"/><circle cx="644.4" cy="1257.9" r="1.5" fill="#666"/>
<text x="704" y="1278" font-size="17" fill="#4a4a4a" stroke="#fff" stroke-width="3" stroke-opacity="0.75" paint-order="stroke" font-family="Liberation Sans">Libreville</text>
<circle cx="737.1" cy="1256.7" r="4" fill="#fff" stroke="#666" stroke-width="1.3"/><circle cx="737.1" cy="1256.7" r="1.5" fill="#666"/>
<text x="886" y="824" font-size="17" fill="#4a4a4a" stroke="#fff" stroke-width="3" stroke-opacity="0.75" paint-order="stroke" font-family="Liberation Sans">N'Djaména</text>
<text x="906" y="843.5" font-size="17" fill="#4a4a4a" stroke="#fff" stroke-width="3" stroke-opacity="0.75" paint-order="stroke" font-family="Liberation Sans">انجمينا</text>
<circle cx="924" cy="854" r="4" fill="#fff" stroke="#666" stroke-width="1.3"/><circle cx="924" cy="854" r="1.5" fill="#666"/>
<text x="875" y="923" font-size="17" fill="#4a4a4a" stroke="#fff" stroke-width="3" stroke-opacity="0.75" paint-order="stroke" font-family="Liberation Sans">Maroua</text>
<circle cx="902" cy="906" r="2.6" fill="#fff" stroke="#8a8a8a" stroke-width="1.2"/>
<text x="844" y="969" font-size="17" fill="#4a4a4a" stroke="#fff" stroke-width="3" stroke-opacity="0.75" paint-order="stroke" font-family="Liberation Sans">Garoua</text>
<circle cx="872" cy="945" r="2.6" fill="#fff" stroke="#8a8a8a" stroke-width="1.2"/>
<text x="1023" y="1112" font-size="17" fill="#4a4a4a" stroke="#fff" stroke-width="3" stroke-opacity="0.75" paint-order="stroke" font-family="Liberation Sans">Bangui</text>
<circle cx="1049" cy="1122" r="4" fill="#fff" stroke="#666" stroke-width="1.3"/><circle cx="1049" cy="1122" r="1.5" fill="#666"/>
<text x="879" y="1144" font-size="12" fill="#777" stroke="#fff" stroke-width="3" stroke-opacity="0.75" paint-order="stroke" font-family="Liberation Sans">Est</text>
<path d="M716.2,1070.6 L717.6,1068.5 L721.0,1067.0 L723.7,1064.8 L725.5,1062.6 L729.6,1061.3 L730.8,1059.9 L734.0,1056.3 L737.4,1052.8 L738.8,1051.0 L741.8,1048.4 L745.5,1046.6 L746.9,1045.3 L748.6,1041.2 L751.4,1038.3 L753.8,1035.7 L755.1,1033.2 L757.0,1032.2 L761.3,1030.4 L764.5,1028.9 L766.1,1028.6 L770.1,1028.4 L773.2,1026.8 L775.7,1024.9 L777.3,1027.7 L779.1,1030.9 L782.3,1032.3 L784.2,1034.9 L786.4,1038.7 L789.8,1040.0 L791.8,1041.5 L793.1,1044.7 L795.5,1046.0 L796.8,1049.0 L797.9,1051.2 L800.1,1055.4 L800.4,1059.1 L800.1,1062.5 L801.7,1064.7 L799.9,1068.4 L801.1,1072.0 L801.0,1075.6 L799.0,1079.0 L798.9,1082.3 L798.7,1085.5 L797.6,1088.5 L798.1,1091.4 L797.5,1094.3 L793.6,1095.7 L792.2,1097.0 L787.6,1098.3 L784.6,1099.6 L781.9,1101.1 L779.1,1103.4 L777.3,1105.7 L774.3,1107.3 L774.4,1110.1 L771.9,1113.2 L775.9,1114.4 L779.8,1113.1 L783.3,1115.5 L786.5,1114.9 L788.3,1118.0 L791.1,1120.0 L794.2,1121.4 L795.9,1125.5 L792.4,1127.1 L789.6,1130.0 L787.4,1133.7 L783.8,1134.4 L783.0,1135.8 L778.3,1137.8 L776.7,1139.5 L772.5,1140.6 L772.0,1141.5 L769.6,1145.9 L768.3,1150.3 L767.5,1153.6 L764.0,1154.1 L762.5,1153.6 L757.7,1154.1 L754.6,1155.6 L750.4,1156.3 L750.5,1153.0 L749.1,1149.1 L747.1,1148.5 L746.9,1143.6 L746.7,1141.7 L744.6,1139.3 L743.3,1135.6 L740.4,1134.6 L737.4,1134.7 L734.5,1133.4 L731.6,1131.4 L728.6,1131.0 L725.7,1131.1 L722.7,1129.7 L720.7,1127.9 L718.7,1124.3 L715.4,1122.1 L713.2,1121.1 L711.3,1118.2 L708.0,1115.3 L705.7,1114.4 L703.5,1110.0 L705.1,1107.0 L707.1,1105.7 L709.1,1102.6 L711.0,1099.4 L712.7,1097.1 L714.2,1092.9 L715.7,1090.3 L715.3,1086.6 L716.3,1083.6 L716.0,1081.0 L717.0,1077.9 L715.1,1074.2 Z" fill="#fdf0e0" fill-opacity="0.85" stroke="#fdf1e2" stroke-width="2" stroke-linejoin="round"/>
<path d="M750.4,1156.3 L754.6,1155.6 L757.7,1154.1 L762.5,1153.6 L764.0,1154.1 L767.5,1153.6 L770.6,1153.0 L773.7,1153.7 L776.8,1153.7 L780.1,1153.4 L783.6,1154.5 L787.2,1153.8 L791.0,1155.9 L794.7,1155.2 L797.1,1159.5 L799.2,1161.7 L803.2,1160.0 L806.3,1159.4 L808.5,1159.8 L811.2,1159.3 L815.9,1157.4 L817.4,1155.2 L820.6,1153.1 L823.5,1151.6 L826.8,1150.1 L830.0,1152.9 L833.3,1152.1 L835.2,1148.9 L837.6,1147.6 L839.9,1144.4 L841.6,1143.2 L843.1,1146.0 L844.0,1147.6 L844.8,1152.6 L846.2,1155.1 L848.3,1156.5 L850.5,1161.7 L852.3,1164.2 L854.6,1167.5 L855.8,1171.5 L859.3,1171.9 L861.9,1171.6 L864.1,1172.6 L866.8,1172.4 L870.4,1173.7 L874.3,1173.2 L877.9,1174.3 L881.1,1173.2 L881.1,1175.3 L882.1,1178.8 L881.8,1183.0 L882.6,1186.2 L881.8,1188.9 L882.6,1192.3 L881.5,1195.6 L882.6,1197.5 L879.2,1198.1 L876.1,1197.4 L873.3,1198.0 L870.5,1197.2 L867.6,1198.0 L864.7,1197.0 L861.7,1197.8 L858.2,1196.8 L854.6,1197.7 L851.6,1196.5 L849.3,1197.5 L847.1,1196.2 L843.9,1197.2 L839.7,1195.8 L835.8,1196.9 L833.2,1195.4 L831.4,1196.6 L829.2,1195.0 L825.5,1196.2 L821.2,1194.5 L817.5,1195.8 L815.2,1194.1 L813.3,1195.4 L810.6,1193.7 L806.9,1195.0 L803.0,1193.9 L800.2,1194.8 L797.1,1195.0 L794.6,1194.4 L792.4,1195.9 L788.1,1194.6 L784.0,1195.9 L782.4,1195.7 L780.2,1195.4 L776.2,1196.7 L772.8,1195.4 L769.7,1197.0 L766.5,1196.3 L764.5,1196.5 L761.9,1197.5 L757.2,1196.3 L753.7,1198.0 L752.3,1194.2 L751.0,1191.3 L749.9,1188.6 L749.5,1185.8 L751.6,1182.8 L750.1,1179.3 L750.8,1175.6 L750.1,1172.0 L750.5,1169.0 L752.1,1166.2 L750.8,1163.3 L751.9,1160.0 Z" fill="#f6eedc" fill-opacity="0.8" stroke="#fdf1e2" stroke-width="2" stroke-linejoin="round"/>
<path d="M854.5,1064.1 L856.9,1064.8 L859.8,1064.6 L862.8,1063.5 L865.1,1064.6 L868.8,1062.9 L873.5,1063.6 L876.3,1063.1 L878.2,1062.2 L881.4,1063.3 L884.6,1061.6 L887.6,1062.6 L891.9,1061.9 L895.6,1061.5 L897.3,1062.5 L899.7,1061.0 L903.7,1062.4 L907.0,1061.6 L910.3,1063.0 L912.3,1064.6 L916.0,1066.1 L914.5,1069.7 L915.4,1073.1 L914.3,1076.3 L913.2,1079.2 L914.3,1082.1 L913.0,1085.1 L913.9,1088.3 L914.3,1091.7 L916.6,1093.7 L917.2,1095.6 L916.6,1097.5 L918.3,1101.5 L917.2,1104.5 L919.3,1108.1 L918.6,1111.6 L920.1,1112.9 L922.1,1116.9 L924.5,1118.6 L926.7,1122.3 L928.0,1122.8 L928.9,1126.9 L930.2,1130.3 L932.5,1132.1 L932.3,1135.9 L932.6,1139.2 L934.4,1143.6 L934.1,1146.6 L936.7,1148.7 L937.7,1150.0 L941.0,1151.8 L942.7,1154.3 L946.2,1156.5 L948.4,1157.7 L950.9,1158.8 L953.2,1161.4 L954.4,1164.7 L957.0,1167.2 L957.9,1168.3 L961.1,1169.4 L962.7,1171.6 L963.9,1174.8 L963.7,1177.5 L964.5,1180.1 L964.8,1183.9 L964.9,1188.1 L965.3,1191.0 L964.7,1193.0 L965.4,1195.6 L964.7,1198.8 L965.5,1201.3 L965.1,1204.3 L965.9,1208.8 L966.0,1212.2 L966.8,1214.0 L963.9,1212.6 L961.9,1211.3 L958.1,1210.0 L955.8,1208.5 L953.0,1206.8 L949.3,1205.0 L946.0,1202.9 L942.8,1202.1 L939.5,1202.3 L936.2,1200.5 L932.9,1201.4 L929.6,1200.9 L926.3,1199.5 L922.9,1200.1 L919.6,1197.9 L916.3,1197.3 L913.2,1197.2 L909.9,1197.6 L907.1,1196.8 L905.0,1197.9 L902.2,1196.6 L897.8,1198.1 L893.7,1196.7 L891.3,1198.2 L889.5,1197.0 L886.5,1198.2 L882.6,1197.5 L881.5,1195.6 L882.6,1192.3 L881.8,1188.9 L882.6,1186.2 L881.8,1183.0 L882.1,1178.8 L881.1,1175.3 L881.1,1173.2 L877.9,1174.3 L874.3,1173.2 L870.4,1173.7 L866.8,1172.4 L864.1,1172.6 L861.9,1171.6 L859.3,1171.9 L855.8,1171.5 L854.6,1167.5 L852.3,1164.2 L850.5,1161.7 L848.3,1156.5 L846.2,1155.1 L844.8,1152.6 L844.0,1147.6 L843.1,1146.0 L841.6,1143.2 L844.6,1138.0 L845.9,1135.4 L847.4,1133.0 L848.2,1129.8 L848.3,1125.9 L848.6,1122.2 L849.9,1119.1 L852.0,1116.4 L854.7,1115.3 L857.4,1114.4 L861.1,1113.5 L862.1,1112.3 L864.6,1108.7 L863.2,1103.8 L862.9,1101.8 L861.7,1098.2 L859.0,1096.8 L856.1,1094.6 L854.4,1090.8 L853.6,1089.1 L857.2,1087.1 L858.0,1082.2 L856.6,1079.2 L855.9,1076.2 L856.7,1073.8 L854.8,1071.6 L854.7,1067.0 Z" fill="#f8d6a6" fill-opacity="0.85" stroke="#fbe0bb" stroke-width="2" stroke-linejoin="round"/>
<path d="M801.7,1064.7 L804.9,1064.0 L807.4,1063.1 L810.9,1061.7 L813.7,1060.1 L816.5,1058.4 L820.0,1057.1 L822.5,1056.3 L825.1,1057.5 L828.2,1056.4 L831.8,1057.9 L834.3,1059.6 L837.9,1061.4 L839.8,1063.1 L843.7,1064.9 L845.9,1064.8 L850.2,1065.7 L854.5,1064.1 L854.7,1067.0 L854.8,1071.6 L856.7,1073.8 L855.9,1076.2 L856.6,1079.2 L858.0,1082.2 L857.2,1087.1 L853.6,1089.1 L854.4,1090.8 L856.1,1094.6 L859.0,1096.8 L861.7,1098.2 L862.9,1101.8 L863.2,1103.8 L864.6,1108.7 L862.1,1112.3 L861.1,1113.5 L857.4,1114.4 L854.7,1115.3 L852.0,1116.4 L849.9,1119.1 L848.6,1122.2 L848.3,1125.9 L848.2,1129.8 L847.4,1133.0 L845.9,1135.4 L844.6,1138.0 L841.6,1143.2 L839.9,1144.4 L837.6,1147.6 L835.2,1148.9 L833.3,1152.1 L830.0,1152.9 L826.8,1150.1 L823.5,1151.6 L820.6,1153.1 L817.4,1155.2 L815.9,1157.4 L811.2,1159.3 L808.5,1159.8 L806.3,1159.4 L803.2,1160.0 L799.2,1161.7 L797.1,1159.5 L794.7,1155.2 L791.0,1155.9 L787.2,1153.8 L783.6,1154.5 L780.1,1153.4 L776.8,1153.7 L773.7,1153.7 L770.6,1153.0 L767.5,1153.6 L768.3,1150.3 L769.6,1145.9 L772.0,1141.5 L772.5,1140.6 L776.7,1139.5 L778.3,1137.8 L783.0,1135.8 L783.8,1134.4 L787.4,1133.7 L789.6,1130.0 L792.4,1127.1 L795.9,1125.5 L794.2,1121.4 L791.1,1120.0 L788.3,1118.0 L786.5,1114.9 L783.3,1115.5 L779.8,1113.1 L775.9,1114.4 L771.9,1113.2 L774.4,1110.1 L774.3,1107.3 L777.3,1105.7 L779.1,1103.4 L781.9,1101.1 L784.6,1099.6 L787.6,1098.3 L792.2,1097.0 L793.6,1095.7 L797.5,1094.3 L798.1,1091.4 L797.6,1088.5 L798.7,1085.5 L798.9,1082.3 L799.0,1079.0 L801.0,1075.6 L801.1,1072.0 L799.9,1068.4 Z" fill="#f29e55" fill-opacity="0.85" stroke="#f6b677" stroke-width="2" stroke-linejoin="round"/>
<path d="M868.7,927.1 L870.6,925.3 L873.4,923.5 L876.5,923.0 L881.0,924.3 L884.7,922.9 L887.3,923.9 L890.8,922.7 L894.2,925.6 L897.6,925.4 L899.4,930.7 L897.1,933.4 L895.5,936.8 L894.7,938.2 L896.4,941.0 L899.1,944.1 L902.1,945.4 L904.0,949.4 L905.6,951.9 L908.3,953.8 L911.0,957.8 L912.4,959.0 L915.5,960.6 L918.0,962.6 L921.2,964.8 L923.5,967.1 L926.8,969.5 L928.9,971.7 L932.4,973.5 L934.4,975.1 L934.6,978.2 L935.4,982.0 L937.4,983.9 L936.9,987.7 L936.6,989.7 L938.6,994.2 L940.5,997.3 L942.2,998.6 L943.7,1002.8 L945.0,1004.9 L946.5,1007.8 L945.8,1011.2 L944.0,1012.5 L940.7,1015.4 L937.6,1017.0 L935.6,1021.4 L933.1,1021.9 L930.8,1022.7 L926.6,1024.1 L924.3,1025.7 L921.6,1027.1 L917.7,1028.0 L915.4,1028.4 L911.5,1027.8 L908.2,1026.8 L905.9,1025.4 L902.7,1023.4 L900.7,1021.8 L898.0,1017.8 L896.6,1015.8 L895.1,1013.6 L892.3,1009.8 L890.2,1008.3 L887.1,1007.0 L884.0,1008.0 L881.0,1006.4 L877.2,1007.9 L873.2,1006.3 L869.7,1007.6 L867.1,1006.2 L863.7,1009.1 L860.7,1008.3 L857.7,1006.3 L854.9,1004.7 L852.0,1004.6 L849.2,1004.2 L846.2,1002.5 L842.6,1001.2 L840.9,998.3 L838.4,996.1 L835.8,995.3 L834.9,992.8 L835.2,989.6 L833.0,985.7 L833.3,982.8 L835.5,980.2 L838.8,978.5 L841.4,977.0 L845.7,975.4 L847.7,973.6 L851.5,971.6 L854.9,969.6 L854.2,966.8 L855.6,963.6 L853.5,959.6 L854.8,955.9 L853.8,952.9 L855.8,950.1 L857.2,948.4 L860.6,946.6 L863.4,944.7 L865.8,942.8 L867.4,938.8 L866.9,935.5 L868.0,932.8 L866.5,930.2 Z" fill="#f4a057" fill-opacity="0.88" stroke="#f98a3c" stroke-width="3" stroke-linejoin="round"/>
<path d="M896.5,820.9 L899.5,819.7 L901.8,821.3 L905.4,820.1 L909.7,820.0 L911.7,823.2 L913.6,827.1 L913.2,831.0 L916.3,832.1 L920.5,833.1 L923.1,834.1 L922.1,839.3 L924.0,842.9 L924.1,845.9 L923.0,850.1 L924.9,853.0 L927.0,855.2 L930.0,856.6 L929.0,859.2 L929.8,862.5 L928.5,866.8 L930.3,870.2 L932.9,871.8 L930.9,876.2 L929.7,880.0 L929.7,883.7 L929.4,886.7 L930.2,889.4 L930.5,892.8 L931.6,896.9 L931.0,897.9 L933.1,901.3 L933.0,904.4 L933.5,908.5 L936.1,909.0 L938.0,913.8 L939.0,915.9 L939.4,918.5 L942.5,920.1 L946.4,922.8 L948.5,926.3 L952.1,929.0 L948.0,927.7 L944.4,928.9 L941.8,928.1 L939.0,928.5 L936.1,928.7 L933.5,928.1 L930.2,929.1 L926.0,927.9 L923.0,929.4 L921.4,927.9 L919.0,929.4 L914.6,928.1 L910.6,929.2 L908.4,928.5 L906.3,928.8 L903.1,929.0 L899.6,928.4 L897.6,925.4 L894.2,925.6 L890.8,922.7 L887.3,923.9 L884.7,922.9 L881.0,924.3 L876.5,923.0 L876.6,919.8 L876.5,917.0 L878.2,914.5 L876.9,912.1 L877.9,909.4 L877.4,906.0 L876.5,902.4 L878.2,900.2 L880.4,895.6 L882.2,892.3 L883.2,889.9 L885.7,887.7 L889.1,885.4 L890.4,883.7 L895.2,880.5 L898.1,883.7 L902.2,880.9 L904.2,878.8 L907.2,876.8 L910.5,874.5 L912.3,872.6 L911.2,866.6 L913.7,861.2 L914.2,857.7 L914.2,855.0 L915.5,851.8 L910.9,845.5 L908.8,846.4 L906.5,845.3 L903.7,844.5 L900.4,845.3 L898.1,842.6 L898.8,838.1 L898.6,834.8 L897.4,831.8 L897.6,827.4 L895.9,824.6 Z" fill="#f4a057" fill-opacity="0.88" stroke="#f98a3c" stroke-width="3" stroke-linejoin="round"/>
<path d="M834.9,992.8 L832.1,994.9 L830.3,997.9 L828.4,998.8 L825.6,1002.3 L822.8,1005.5 L824.2,1008.5 L823.3,1011.6 L821.7,1014.6 L822.0,1017.7 L821.1,1020.9 L819.4,1024.2 L816.0,1025.7 L813.7,1028.1 L812.7,1030.6 L810.2,1031.8 L810.2,1034.7 L809.1,1037.6 L809.0,1040.7 L808.3,1043.9 L805.2,1044.7 L800.1,1046.4 L796.7,1048.2 L798.8,1050.2 L798.5,1053.2 L799.2,1055.0 L800.9,1059.8 L800.2,1062.6 L801.7,1064.7 L804.9,1064.0 L807.4,1063.1 L810.9,1061.7 L813.7,1060.1 L816.5,1058.4 L820.0,1057.1 L822.5,1056.3 L825.1,1057.5 L828.2,1056.4 L831.8,1057.9 L834.3,1059.6 L837.9,1061.4 L839.8,1063.1 L843.7,1064.9 L845.9,1064.6 L850.4,1065.6 L854.4,1064.2 L856.8,1064.3 L859.9,1064.7 L862.7,1063.2 L865.0,1064.5 L869.0,1062.9 L873.6,1063.4 L876.1,1063.2 L878.2,1062.1 L881.5,1063.2 L884.6,1061.5 L887.6,1062.5 L892.0,1062.0 L895.6,1061.4 L897.2,1062.5 L899.7,1061.0 L903.7,1062.3 L907.0,1061.6 L910.8,1060.0 L912.2,1057.9 L913.7,1056.6 L917.2,1053.6 L918.9,1052.1 L920.2,1050.4 L921.8,1048.0 L923.6,1044.9 L925.4,1042.0 L926.9,1039.8 L927.7,1036.6 L929.3,1031.8 L931.6,1029.5 L933.3,1027.4 L934.2,1024.1 L935.6,1021.4 L933.1,1021.9 L930.8,1022.7 L926.6,1024.1 L924.3,1025.7 L921.6,1027.1 L917.7,1028.0 L915.4,1028.4 L911.5,1027.8 L908.2,1026.8 L905.9,1025.4 L902.7,1023.4 L900.7,1021.8 L898.0,1017.8 L896.6,1015.8 L895.1,1013.6 L892.3,1009.8 L890.2,1008.3 L887.1,1007.0 L884.0,1008.0 L881.0,1006.4 L877.2,1007.9 L873.2,1006.3 L869.7,1007.6 L867.1,1006.2 L863.7,1009.1 L860.7,1008.3 L857.7,1006.3 L854.9,1004.7 L852.0,1004.6 L849.2,1004.2 L846.2,1002.5 L842.6,1001.2 L840.9,998.3 L838.4,996.1 L835.8,995.3 Z" fill="#b3602e" fill-opacity="0.85" stroke="#a5360a" stroke-width="3.2" stroke-linejoin="round"/>
<rect x="538" y="729" width="56" height="88" rx="12" fill="#0d8fb5"/>
<path d="M566,741 V761 M556,751 H576" stroke="#fff" stroke-width="2" fill="none"/>
<path d="M556,794.5 H576" stroke="#fff" stroke-width="2" fill="none"/>
<rect x="538" y="832" width="56" height="44" rx="12" fill="#0d8fb5"/>
<g stroke="#fff" stroke-width="2" fill="none" stroke-linecap="square"><path d="M556,844 L562.5,850.5 M556,850.5 H562.5 V844"/><path d="M576,844 L569.5,850.5 M576,850.5 H569.5 V844"/><path d="M556,864 L562.5,857.5 M556,857.5 H562.5 V864"/><path d="M576,864 L569.5,857.5 M576,857.5 H569.5 V864"/></g>
<rect x="909.5" y="1289" width="252" height="25" fill="#fff" fill-opacity="0.8"/>
<rect x="916" y="1295.5" width="18" height="6" fill="#0057b7"/><rect x="916" y="1301.5" width="18" height="6" fill="#ffd500"/>
<text x="939" y="1307" font-size="18" letter-spacing="-0.05" font-family="Liberation Sans" fill="#333"><tspan fill="#0078a8">Leaflet</tspan> | © <tspan fill="#0078a8">OpenStreetMap</tspan></text>
</svg><!--/MAP-->
</body></html>
